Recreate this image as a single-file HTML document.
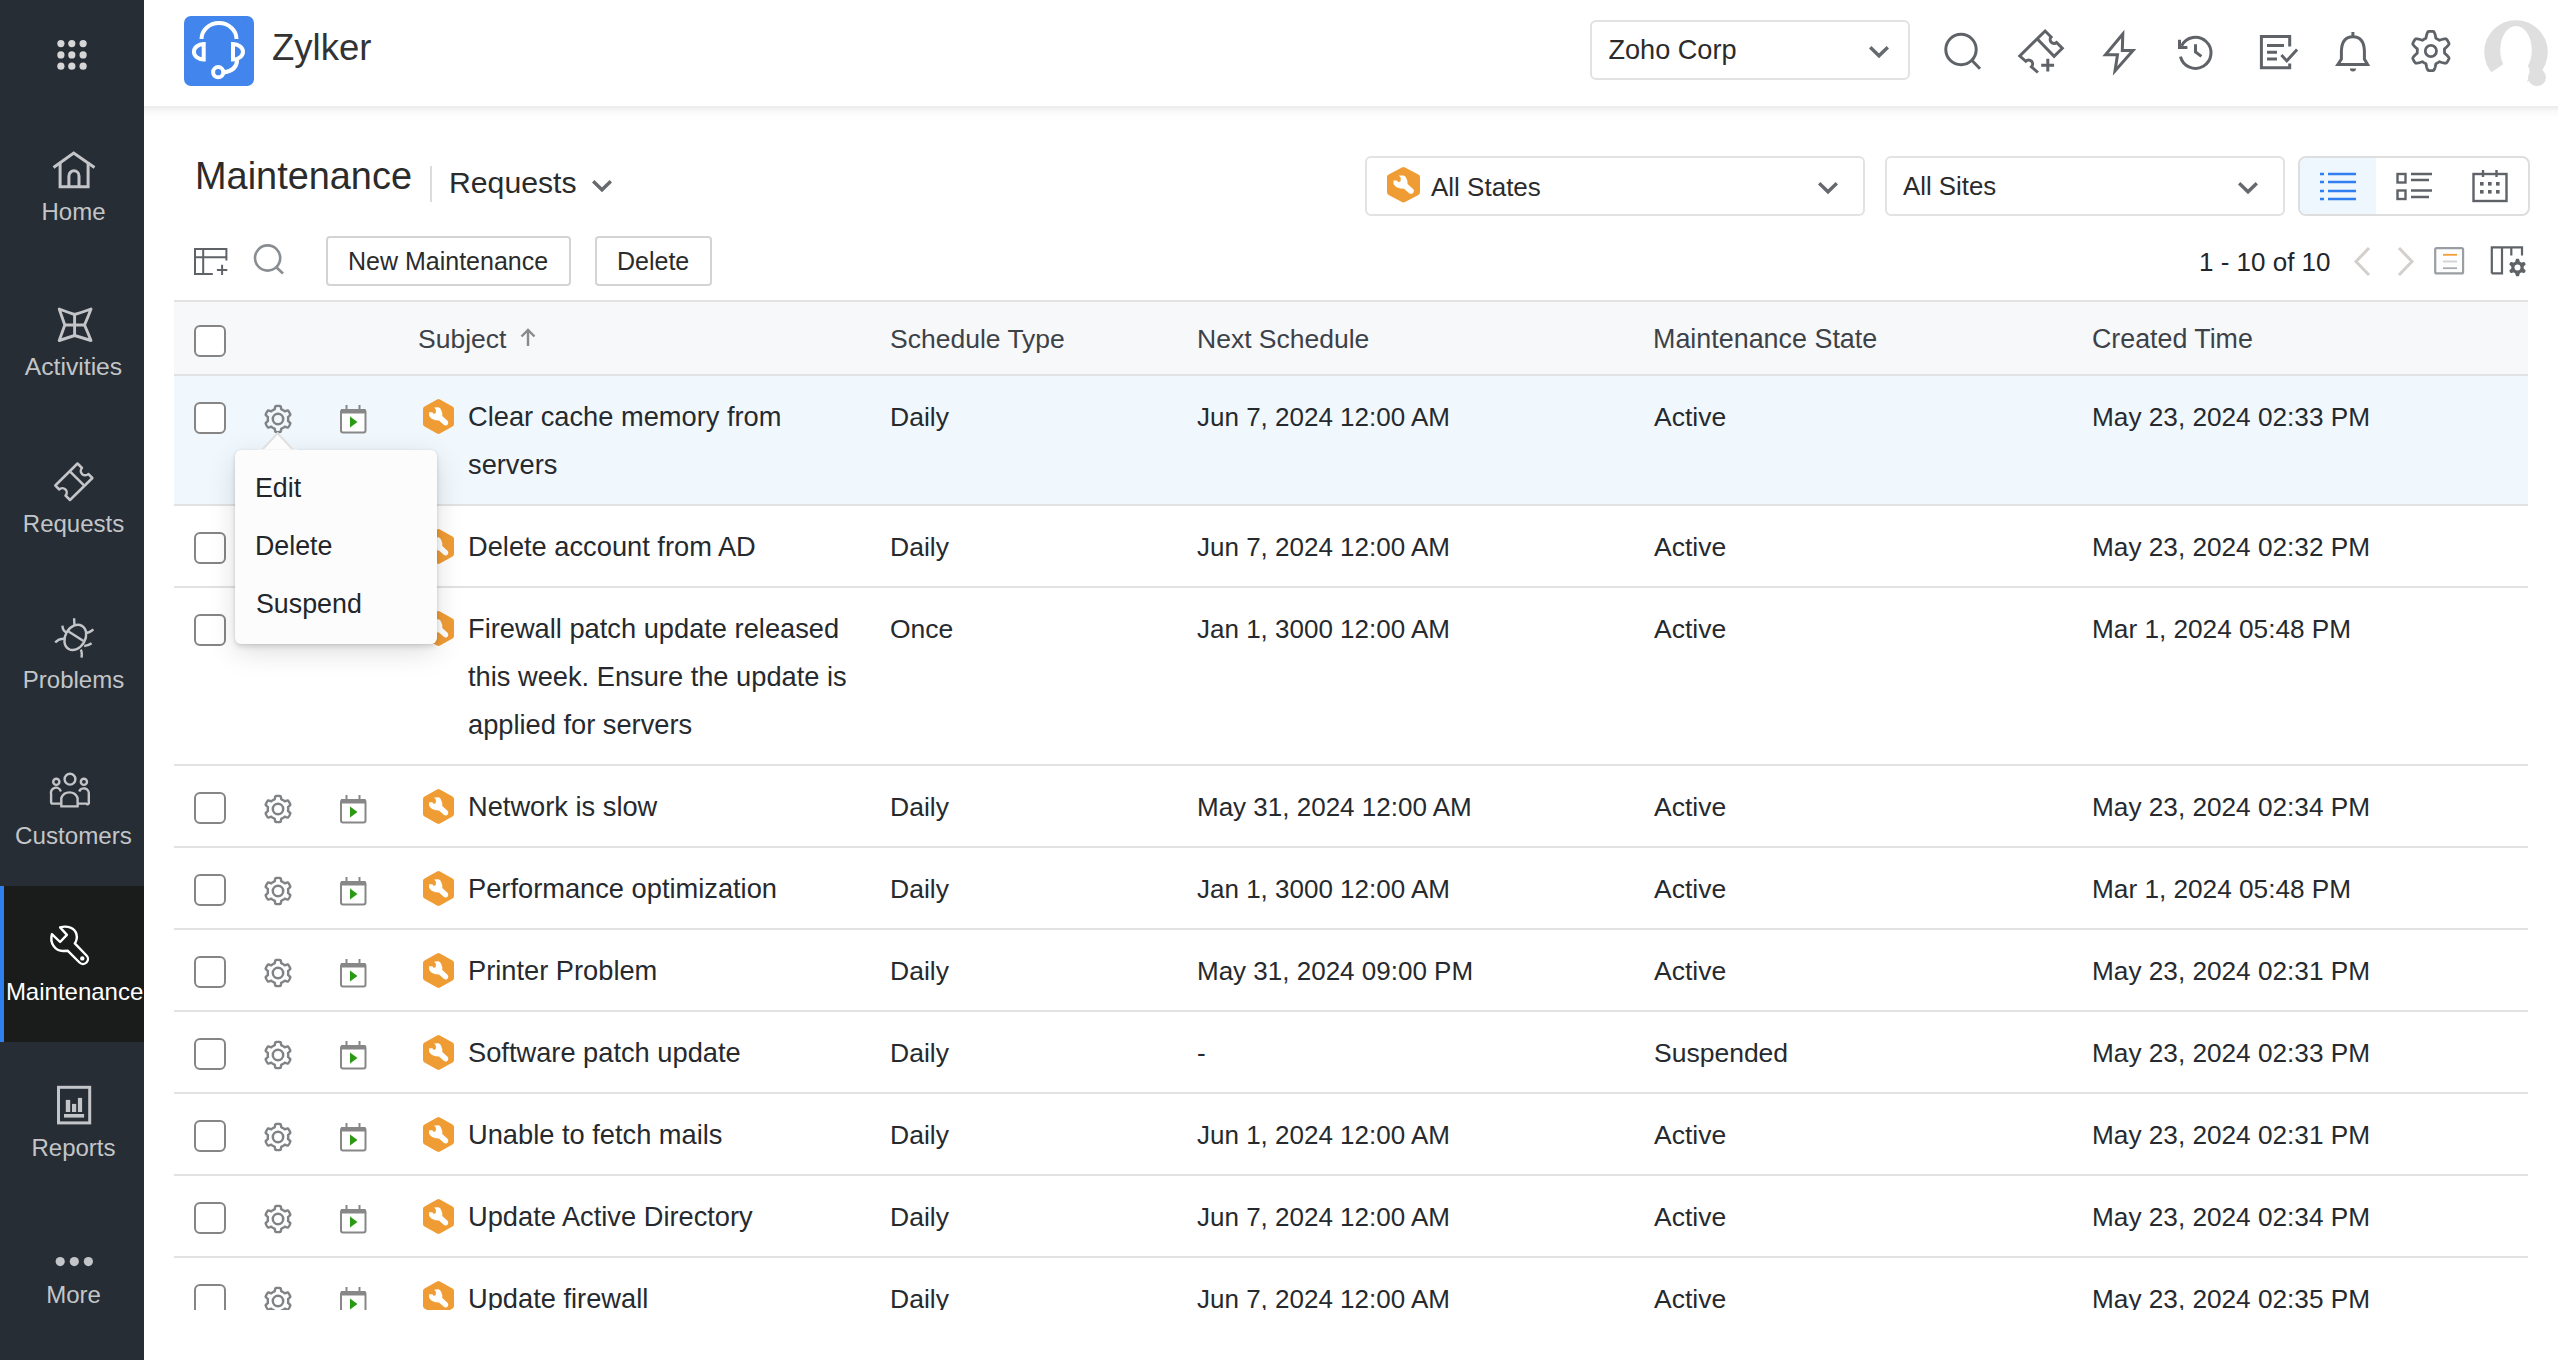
<!DOCTYPE html><html><head><meta charset="utf-8"><style>
*{margin:0;padding:0;box-sizing:border-box}
html,body{width:2558px;height:1360px;overflow:hidden;background:#fff;font-family:"Liberation Sans",sans-serif}
.t{position:absolute;line-height:1;white-space:nowrap}
.a{position:absolute}
svg{position:absolute;overflow:visible}
</style></head><body>
<div class="a" style="left:0;top:0;width:144px;height:1360px;background:#262d35"></div>
<svg style="left:0;top:0" width="144" height="106"><circle cx="60.9" cy="43.6" r="3.6" fill="#d6d6d6"/><circle cx="71.8" cy="43.6" r="3.6" fill="#d6d6d6"/><circle cx="83.1" cy="43.6" r="3.6" fill="#d6d6d6"/><circle cx="60.9" cy="54.9" r="3.6" fill="#d6d6d6"/><circle cx="71.8" cy="54.9" r="3.6" fill="#d6d6d6"/><circle cx="83.1" cy="54.9" r="3.6" fill="#d6d6d6"/><circle cx="60.9" cy="66.2" r="3.6" fill="#d6d6d6"/><circle cx="71.8" cy="66.2" r="3.6" fill="#d6d6d6"/><circle cx="83.1" cy="66.2" r="3.6" fill="#d6d6d6"/></svg>
<div class="a" style="left:0;top:886px;width:144px;height:156px;background:#1a1c1c"></div>
<div class="a" style="left:0;top:886px;width:4px;height:156px;background:#2f7ff0"></div>
<svg style="left:0;top:106px" width="144" height="156"><g fill="none" stroke="#c3c5c8" stroke-width="3" stroke-linejoin="miter">
<path d="M53.5 61.5 L73.7 47 L94.5 61.5"/><path d="M60.1 56 V80.8 H88.1 V56"/><path d="M68.9 80.8 V69.9 A5.05 5.05 0 0 1 79 69.9 V80.8"/></g></svg>
<svg style="left:0;top:262px" width="144" height="156"><g fill="none" stroke="#c3c5c8" stroke-width="2.9" stroke-linejoin="round">
<path d="M59.2 47 Q67 50 74.6 52.5 Q83 50 91 47 Q88 55 84.5 63 Q88 71 91 78.5 Q83 76 74.6 73.5 Q67 76 59.2 78.5 Q62 71 64.8 63 Q62 55 59.2 47 Z"/><path d="M74.6 52.5 V73.5 M64.8 63 H84.5"/></g></svg>
<svg style="left:0;top:418px" width="144" height="156"><g fill="none" stroke="#c3c5c8" stroke-width="2.5" stroke-linejoin="round">
<path d="M77.5 45.5 L82 50 A4.3 4.3 0 0 0 88.3 56 L92.4 60 L70 82 L65.5 77.5 A4.3 4.3 0 0 0 59.3 71.5 L55.3 67.5 Z"/><path d="M70.4 53.8 L83.8 67.2"/></g></svg>
<svg style="left:0;top:574px" width="144" height="156"><g fill="none" stroke="#c3c5c8" stroke-width="2.4" stroke-linecap="butt">
<ellipse cx="75.3" cy="63.4" rx="10" ry="13.3" transform="rotate(30 75.3 63.4)"/><path d="M68.2 57.3 L83.5 67"/>
<path d="M74.1 44.2 L74.4 51 M62.4 51.6 Q62.8 57.5 67 58.6 M55.2 68.6 Q58.5 64.6 64.8 64.8 M93.4 55.3 Q89.5 58.8 85.2 59 M91.6 69.3 Q88 72 84.2 72 M81.6 83.6 Q82.2 78 80.8 75.6"/></g></svg>
<svg style="left:0;top:730px" width="144" height="156"><g fill="none" stroke="#c3c5c8" stroke-width="2.4" stroke-linejoin="round">
<circle cx="70" cy="49.2" r="5.4"/><circle cx="56.3" cy="51.8" r="3.1"/><circle cx="83.9" cy="51.8" r="3.1"/>
<path d="M61.3 76.4 V68 A8.7 8.7 0 0 1 77.6 68 V76.4 Z"/><path d="M61 73.6 H52.5 A1.5 1.5 0 0 1 51.1 72 V64 A5 5 0 0 1 60.8 61.5"/><path d="M77.8 73.6 H86.3 A1.5 1.5 0 0 0 88.8 72 V64 A5 5 0 0 0 79.2 61.5"/></g></svg>
<svg style="left:0;top:886px" width="144" height="156"><g fill="none" stroke="#ffffff" stroke-width="2.4" stroke-linejoin="round">
<path d="M60.1 41.4 L66.9 48.9 L60.1 56 L51.9 48.2 C49.5 57 55 65 63 65 L67.6 64.7 L79.5 76.5 A4.9 4.9 0 0 0 86.5 69.5 L74.8 57.4 C78.5 52 77 44 70.5 41.6 C67 40.4 63 40.5 60.1 41.4 Z"/></g><circle cx="82.3" cy="72.4" r="2.2" fill="#fff"/></svg>
<svg style="left:0;top:1042px" width="144" height="156"><g fill="none" stroke="#c3c5c8" stroke-width="3">
<rect x="58.5" y="45.3" width="31.2" height="35.6"/></g><g fill="#c3c5c8"><rect x="65.8" y="57.9" width="4.4" height="12.1"/><rect x="72" y="61.9" width="4.2" height="8.1"/><rect x="77.9" y="55.9" width="4.2" height="14.1"/><rect x="64" y="72" width="20.1" height="3.6"/></g></svg>
<svg style="left:0;top:1198px" width="144" height="156"><g fill="#c3c5c8"><circle cx="60.2" cy="63.6" r="4.6"/><circle cx="74.3" cy="63.6" r="4.6"/><circle cx="88.4" cy="63.6" r="4.6"/></g></svg>
<div class="t" style="left:1.5px;width:144px;text-align:center;top:199.68px;font-size:24px;color:#c3c5c8">Home</div>
<div class="t" style="left:1.5px;width:144px;text-align:center;top:355.09px;font-size:24.7px;color:#c3c5c8">Activities</div>
<div class="t" style="left:1.5px;width:144px;text-align:center;top:511.68px;font-size:24px;color:#c3c5c8">Requests</div>
<div class="t" style="left:1.5px;width:144px;text-align:center;top:667.68px;font-size:24px;color:#c3c5c8">Problems</div>
<div class="t" style="left:1.5px;width:144px;text-align:center;top:823.51px;font-size:24.2px;color:#c3c5c8">Customers</div>
<div class="t" style="left:2.6px;width:144px;text-align:center;top:979.68px;font-size:24px;color:#ffffff">Maintenance</div>
<div class="t" style="left:1.5px;width:144px;text-align:center;top:1135.68px;font-size:24px;color:#c3c5c8">Reports</div>
<div class="t" style="left:1.5px;width:144px;text-align:center;top:1282.68px;font-size:24px;color:#c3c5c8">More</div>
<div class="a" style="left:144px;top:106px;width:2414px;height:12px;background:linear-gradient(#ececec 0px,#efefef 2px,#f8f8f8 5px,#fcfcfc 8px,#fff 12px)"></div>
<div class="a" style="left:184px;top:16px;width:70px;height:70px;border-radius:7px;background:#4285ec"></div>
<svg style="left:184px;top:16px" width="70" height="70"><g fill="none" stroke="#fff" stroke-width="4">
<path d="M17.5 23 A17.5 16 0 0 1 52.5 23"/>
<path d="M19.7 28.1 V43.5 A9.8 7.7 0 0 1 19.7 28.1 Z"/>
<path d="M49 28.1 V43.5 A10 7.7 0 0 0 49 28.1 Z"/>
<path d="M53.2 44 Q52.5 54.5 40 56.5"/>
<circle cx="34.2" cy="56.2" r="5.1"/></g></svg>
<div class="t" style="left:272px;top:30.10px;font-size:36.5px;color:#333333;">Zylker</div>
<div class="a" style="left:1590px;top:20px;width:320px;height:60px;border:2px solid #e2e2e2;border-radius:6px"></div>
<div class="t" style="left:1608.5px;top:36.26px;font-size:27.1px;color:#2b2b2b;">Zoho Corp</div>
<svg style="left:1868px;top:45px" width="22" height="13"><path d="M2.2 2.2 L11.0 10.8 L19.8 2.2" fill="none" stroke="#666a6e" stroke-width="3.4"/></svg>
<svg style="left:1930px;top:15px" width="630" height="80"><g fill="none" stroke="#5f6368" stroke-width="3">
<circle cx="31" cy="34.5" r="15.2"/><path d="M41.8 45.3 L50 53.8"/>
<path d="M107.9 57.5 L101.5 51.8 A3.9 3.9 0 0 0 95.8 46.3 L89.8 41 L115.1 16 L121.1 22 A3.9 3.9 0 0 0 126.6 27.5 L132.3 33.3 L124.1 41.3 L107.4 24"/>
<path d="M117.8 43.8 V56.6 M111.2 50.3 H124.1"/>
<path d="M192.8 19 L175.5 39.8 H187.5 L185 56 L203 35.6 H192.3 Z"/>
</g></svg>
<svg style="left:2160px;top:15px" width="300" height="80"><g fill="none" stroke="#5f6368" stroke-width="3">
<path d="M20.46 41.55 A15.5 15.5 0 1 0 21.66 30.83"/><path d="M19.5 24.7 V32.6 H27.4" />
<path d="M35.5 29.2 V36.9 L41.4 41.4"/>
<path d="M129.7 31.5 V21.4 H101.4 V52.8 H129.7 V48.6"/><path d="M107 30.6 H124 M107 37.3 H117 M107 44 H117"/><path d="M121.4 40 L126.8 45.9 L137.1 34.6"/>
<path d="M177.8 49.6 H207.6 L204.4 44 V36 Q204 21.8 192.9 21.8 Q181.8 21.8 181.4 36 V44 Z"/><path d="M192.9 17 V21.8"/>
</g><path d="M189.9 53.5 H196 A3.05 3.05 0 0 1 189.9 53.5 Z" fill="#5f6368"/></svg>
<svg style="left:2400px;top:20px" width="60" height="60"><path d="M44.50 31.00 L44.50 31.36 L44.48 31.71 L44.46 32.07 L44.43 32.42 L44.38 32.78 L44.51 33.16 L45.08 33.63 L45.69 34.14 L46.31 34.70 L46.93 35.30 L47.54 35.93 L48.10 36.59 L48.60 37.27 L49.03 37.96 L49.01 38.50 L48.81 38.97 L48.59 39.44 L48.36 39.90 L48.12 40.35 L47.87 40.80 L47.61 41.24 L47.34 41.67 L47.05 42.10 L46.76 42.52 L46.45 42.93 L45.99 43.22 L45.18 43.20 L44.34 43.10 L43.49 42.94 L42.64 42.74 L41.81 42.50 L41.02 42.23 L40.27 41.97 L39.57 41.71 L39.18 41.79 L38.89 42.00 L38.60 42.21 L38.31 42.41 L38.01 42.60 L37.70 42.78 L37.39 42.95 L37.07 43.12 L36.75 43.28 L36.43 43.42 L36.10 43.56 L35.84 43.86 L35.71 44.59 L35.57 45.38 L35.40 46.20 L35.20 47.03 L34.95 47.87 L34.66 48.69 L34.32 49.46 L33.94 50.18 L33.46 50.43 L32.95 50.49 L32.44 50.54 L31.93 50.57 L31.41 50.59 L30.90 50.60 L30.39 50.59 L29.87 50.57 L29.36 50.54 L28.85 50.49 L28.34 50.43 L27.86 50.18 L27.48 49.46 L27.14 48.69 L26.85 47.87 L26.60 47.03 L26.40 46.20 L26.23 45.38 L26.09 44.59 L25.96 43.86 L25.70 43.56 L25.37 43.42 L25.05 43.28 L24.73 43.12 L24.41 42.95 L24.10 42.78 L23.79 42.60 L23.49 42.41 L23.20 42.21 L22.91 42.00 L22.62 41.79 L22.23 41.71 L21.53 41.97 L20.78 42.23 L19.99 42.50 L19.16 42.74 L18.31 42.94 L17.46 43.10 L16.62 43.20 L15.81 43.22 L15.35 42.93 L15.04 42.52 L14.75 42.10 L14.46 41.67 L14.19 41.24 L13.93 40.80 L13.68 40.35 L13.44 39.90 L13.21 39.44 L12.99 38.97 L12.79 38.50 L12.77 37.96 L13.20 37.27 L13.70 36.59 L14.26 35.93 L14.87 35.30 L15.49 34.70 L16.11 34.14 L16.72 33.63 L17.29 33.16 L17.42 32.78 L17.37 32.42 L17.34 32.07 L17.32 31.71 L17.30 31.36 L17.30 31.00 L17.30 30.64 L17.32 30.29 L17.34 29.93 L17.37 29.58 L17.42 29.22 L17.29 28.84 L16.72 28.37 L16.11 27.86 L15.49 27.30 L14.87 26.70 L14.26 26.07 L13.70 25.41 L13.20 24.73 L12.77 24.04 L12.79 23.50 L12.99 23.03 L13.21 22.56 L13.44 22.10 L13.68 21.65 L13.93 21.20 L14.19 20.76 L14.46 20.33 L14.75 19.90 L15.04 19.48 L15.35 19.07 L15.81 18.78 L16.62 18.80 L17.46 18.90 L18.31 19.06 L19.16 19.26 L19.99 19.50 L20.78 19.77 L21.53 20.03 L22.23 20.29 L22.62 20.21 L22.91 20.00 L23.20 19.79 L23.49 19.59 L23.79 19.40 L24.10 19.22 L24.41 19.05 L24.73 18.88 L25.05 18.72 L25.37 18.58 L25.70 18.44 L25.96 18.14 L26.09 17.41 L26.23 16.62 L26.40 15.80 L26.60 14.97 L26.85 14.13 L27.14 13.31 L27.48 12.54 L27.86 11.82 L28.34 11.57 L28.85 11.51 L29.36 11.46 L29.87 11.43 L30.39 11.41 L30.90 11.40 L31.41 11.41 L31.93 11.43 L32.44 11.46 L32.95 11.51 L33.46 11.57 L33.94 11.82 L34.32 12.54 L34.66 13.31 L34.95 14.13 L35.20 14.97 L35.40 15.80 L35.57 16.62 L35.71 17.41 L35.84 18.14 L36.10 18.44 L36.43 18.58 L36.75 18.72 L37.07 18.88 L37.39 19.05 L37.70 19.22 L38.01 19.40 L38.31 19.59 L38.60 19.79 L38.89 20.00 L39.18 20.21 L39.57 20.29 L40.27 20.03 L41.02 19.77 L41.81 19.50 L42.64 19.26 L43.49 19.06 L44.34 18.90 L45.18 18.80 L45.99 18.78 L46.45 19.07 L46.76 19.48 L47.05 19.90 L47.34 20.33 L47.61 20.76 L47.87 21.20 L48.12 21.65 L48.36 22.10 L48.59 22.56 L48.81 23.03 L49.01 23.50 L49.03 24.04 L48.60 24.73 L48.10 25.41 L47.54 26.07 L46.93 26.70 L46.31 27.30 L45.69 27.86 L45.08 28.37 L44.51 28.84 L44.38 29.22 L44.43 29.58 L44.46 29.93 L44.48 30.29 L44.50 30.64 Z" fill="none" stroke="#5f6368" stroke-width="2.8" stroke-linejoin="round"/><circle cx="30.9" cy="31" r="5.6" fill="none" stroke="#5f6368" stroke-width="2.8"/></svg>
<svg style="left:2470px;top:10px" width="88" height="85"><circle cx="46" cy="42" r="31.8" fill="#dfdfdf"/>
<ellipse cx="46" cy="40" rx="15.8" ry="24" fill="#fff"/>
<path d="M34 48 L58 48 L56 53 L59 58 L60 64 L52 85 L10 85 L10 66 L21 62.5 L35 53 Z" fill="#fff"/>
<circle cx="67" cy="67.2" r="8.9" fill="#dfdfdf"/></svg>
<div class="t" style="left:195px;top:157.92px;font-size:37.9px;color:#2b2b2b;">Maintenance</div>
<div class="a" style="left:430px;top:166px;width:2px;height:36px;background:#dcdcdc"></div>
<div class="t" style="left:449px;top:168.04px;font-size:30.2px;color:#2b2b2b;">Requests</div>
<svg style="left:591px;top:178.6px" width="22" height="13"><path d="M2.2 2.2 L11.0 10.8 L19.8 2.2" fill="none" stroke="#666a6e" stroke-width="3.4"/></svg>
<div class="a" style="left:1365px;top:156px;width:500px;height:60px;border:2px solid #e2e2e2;border-radius:6px"></div>
<svg style="left:1387px;top:167.4px" width="33" height="35.4"><g transform="scale(1.0645 1.0114)"><path d="M15.5 3 L28 10 V25 L15.5 32 L3 25 V10 Z" fill="#f09c35" stroke="#f09c35" stroke-width="6" stroke-linejoin="round"/><path d="M11.2 8.5 L15.6 8.3 Q17.6 9.2 17.9 10.6 Q19.6 13.5 19.3 16.9 L24.5 21.7 Q25.6 23 25.2 24.3 Q24.7 26.2 23.4 26.5 Q22 26.7 21.1 26.1 L16 21.5 Q12.5 21.5 9.7 20.2 Q7.3 19 6.1 16.7 L6.1 13.3 L9.4 13.3 L10.7 15 L12.8 14 L12.9 10.7 Z" fill="#fff"/></g></svg>
<div class="t" style="left:1431px;top:173.99px;font-size:26px;color:#2b2b2b;">All States</div>
<svg style="left:1817px;top:181px" width="22" height="13"><path d="M2.2 2.2 L11.0 10.8 L19.8 2.2" fill="none" stroke="#666a6e" stroke-width="3.4"/></svg>
<div class="a" style="left:1885px;top:156px;width:400px;height:60px;border:2px solid #e2e2e2;border-radius:6px"></div>
<div class="t" style="left:1903px;top:174.16px;font-size:25.8px;color:#2b2b2b;">All Sites</div>
<svg style="left:2237px;top:181px" width="22" height="13"><path d="M2.2 2.2 L11.0 10.8 L19.8 2.2" fill="none" stroke="#666a6e" stroke-width="3.4"/></svg>
<div class="a" style="left:2298px;top:156px;width:232px;height:60px;border:2px solid #dedede;border-radius:8px;overflow:hidden"><div class="a" style="left:0;top:0;width:76px;height:56px;background:#eef6fe"></div></div>
<svg style="left:2298px;top:156px" width="232" height="60"><g stroke="#2f7ff0" stroke-width="2.6">
<path d="M22 18 H26 M30 18 H58 M22 26 H26 M30 26 H58 M22 35 H26 M30 35 H58 M22 43 H26 M30 43 H58"/></g>
<g fill="none" stroke="#5f6368" stroke-width="2.4"><rect x="99.5" y="18" width="8" height="8.5"/><rect x="99.5" y="34.5" width="8" height="8.5"/>
<path d="M113 18 H134 M113 24 H131 M113 34.5 H134 M113 41 H131"/>
<rect x="175.5" y="18" width="33" height="27"/><path d="M185 14 V21 M198.5 14 V21"/></g>
<g fill="#5f6368"><rect x="182" y="26" width="3.6" height="3.6"/><rect x="190" y="26" width="3.6" height="3.6"/><rect x="198" y="26" width="3.6" height="3.6"/>
<rect x="182" y="34" width="3.6" height="3.6"/><rect x="190" y="34" width="3.6" height="3.6"/><rect x="198" y="34" width="3.6" height="3.6"/></g></svg>
<svg style="left:180px;top:230px" width="120" height="60"><g fill="none" stroke="#5f6368" stroke-width="2">
<path d="M32.8 43.9 H15 V19 H46.4 V30.5"/><path d="M15 27.2 H46.4 M23.2 19 V43.9"/><path d="M42.1 34.7 V45.1 M36.9 39.9 H47.3"/></g>
<g fill="none" stroke="#888d92" stroke-width="2.6"><circle cx="87.6" cy="28" r="12.6"/><path d="M96 37 L103 43.5"/></g></svg>
<div class="a" style="left:326px;top:236px;width:245px;height:50px;border:2px solid #d4d4d4;border-radius:4px"></div>
<div class="t" style="left:348px;top:249.14px;font-size:25px;color:#2b2b2b;">New Maintenance</div>
<div class="a" style="left:595px;top:236px;width:117px;height:50px;border:2px solid #d4d4d4;border-radius:4px"></div>
<div class="t" style="left:617px;top:249.14px;font-size:25px;color:#2b2b2b;">Delete</div>
<div class="t" style="left:2199px;top:249.29px;font-size:26px;color:#22262b;">1 - 10 of 10</div>
<svg style="left:2340px;top:240px" width="200" height="45"><g fill="none" stroke="#d2cfcc" stroke-width="3">
<path d="M29 8 L16 21.5 L29 35"/><path d="M59 8 L72 21.5 L59 35"/></g>
<rect x="95.2" y="8.1" width="27.9" height="25.3" rx="1.5" fill="#fdfdfd" stroke="#999ea3" stroke-width="2.2"/>
<path d="M103 14.8 H117" stroke="#f29d38" stroke-width="1.8"/><path d="M103 21.5 H117" stroke="#d2d4d6" stroke-width="2"/><path d="M103 28.2 H117" stroke="#a5a9ad" stroke-width="1.7"/>
<g fill="none" stroke="#5f6368" stroke-width="2.2"><path d="M151.8 33.4 V7.3 H182 V15.5 M162 7.3 V33.4 H151.8 M171.3 7.3 V15.5"/></g>
</svg>
<svg style="left:2500px;top:260px" width="30" height="30"><path d="M23.70 7.50 L23.70 7.66 L23.69 7.82 L23.68 7.99 L23.67 8.15 L23.65 8.31 L23.70 8.48 L23.95 8.69 L24.21 8.93 L24.48 9.17 L24.74 9.44 L25.00 9.72 L25.24 10.02 L25.46 10.32 L25.64 10.63 L25.63 10.87 L25.54 11.08 L25.44 11.29 L25.34 11.50 L25.23 11.70 L25.12 11.90 L25.00 12.10 L24.88 12.29 L24.75 12.48 L24.62 12.67 L24.48 12.86 L24.28 12.99 L23.92 12.98 L23.55 12.95 L23.18 12.89 L22.80 12.80 L22.44 12.70 L22.09 12.60 L21.76 12.48 L21.45 12.38 L21.27 12.42 L21.14 12.52 L21.01 12.61 L20.88 12.70 L20.74 12.79 L20.60 12.87 L20.46 12.95 L20.31 13.02 L20.17 13.10 L20.02 13.16 L19.87 13.23 L19.75 13.36 L19.69 13.68 L19.62 14.02 L19.54 14.38 L19.44 14.74 L19.33 15.11 L19.19 15.46 L19.04 15.80 L18.86 16.12 L18.65 16.22 L18.42 16.25 L18.19 16.27 L17.96 16.29 L17.73 16.30 L17.50 16.30 L17.27 16.30 L17.04 16.29 L16.81 16.27 L16.58 16.25 L16.35 16.22 L16.14 16.12 L15.96 15.80 L15.81 15.46 L15.67 15.11 L15.56 14.74 L15.46 14.38 L15.38 14.02 L15.31 13.68 L15.25 13.36 L15.13 13.23 L14.98 13.16 L14.83 13.10 L14.69 13.02 L14.54 12.95 L14.40 12.87 L14.26 12.79 L14.12 12.70 L13.99 12.61 L13.86 12.52 L13.73 12.42 L13.55 12.38 L13.24 12.48 L12.91 12.60 L12.56 12.70 L12.20 12.80 L11.82 12.89 L11.45 12.95 L11.08 12.98 L10.72 12.99 L10.52 12.86 L10.38 12.67 L10.25 12.48 L10.12 12.29 L10.00 12.10 L9.88 11.90 L9.77 11.70 L9.66 11.50 L9.56 11.29 L9.46 11.08 L9.37 10.87 L9.36 10.63 L9.54 10.32 L9.76 10.02 L10.00 9.72 L10.26 9.44 L10.52 9.17 L10.79 8.93 L11.05 8.69 L11.30 8.48 L11.35 8.31 L11.33 8.15 L11.32 7.99 L11.31 7.82 L11.30 7.66 L11.30 7.50 L11.30 7.34 L11.31 7.18 L11.32 7.01 L11.33 6.85 L11.35 6.69 L11.30 6.52 L11.05 6.31 L10.79 6.07 L10.52 5.83 L10.26 5.56 L10.00 5.28 L9.76 4.98 L9.54 4.68 L9.36 4.37 L9.37 4.13 L9.46 3.92 L9.56 3.71 L9.66 3.50 L9.77 3.30 L9.88 3.10 L10.00 2.90 L10.12 2.71 L10.25 2.52 L10.38 2.33 L10.52 2.14 L10.72 2.01 L11.08 2.02 L11.45 2.05 L11.82 2.11 L12.20 2.20 L12.56 2.30 L12.91 2.40 L13.24 2.52 L13.55 2.62 L13.73 2.58 L13.86 2.48 L13.99 2.39 L14.12 2.30 L14.26 2.21 L14.40 2.13 L14.54 2.05 L14.69 1.98 L14.83 1.90 L14.98 1.84 L15.13 1.77 L15.25 1.64 L15.31 1.32 L15.38 0.98 L15.46 0.62 L15.56 0.26 L15.67 -0.11 L15.81 -0.46 L15.96 -0.80 L16.14 -1.12 L16.35 -1.22 L16.58 -1.25 L16.81 -1.27 L17.04 -1.29 L17.27 -1.30 L17.50 -1.30 L17.73 -1.30 L17.96 -1.29 L18.19 -1.27 L18.42 -1.25 L18.65 -1.22 L18.86 -1.12 L19.04 -0.80 L19.19 -0.46 L19.33 -0.11 L19.44 0.26 L19.54 0.62 L19.62 0.98 L19.69 1.32 L19.75 1.64 L19.87 1.77 L20.02 1.84 L20.17 1.90 L20.31 1.98 L20.46 2.05 L20.60 2.13 L20.74 2.21 L20.88 2.30 L21.01 2.39 L21.14 2.48 L21.27 2.58 L21.45 2.62 L21.76 2.52 L22.09 2.40 L22.44 2.30 L22.80 2.20 L23.18 2.11 L23.55 2.05 L23.92 2.02 L24.28 2.01 L24.48 2.14 L24.62 2.33 L24.75 2.52 L24.88 2.71 L25.00 2.90 L25.12 3.10 L25.23 3.30 L25.34 3.50 L25.44 3.71 L25.54 3.92 L25.63 4.13 L25.64 4.37 L25.46 4.68 L25.24 4.98 L25.00 5.28 L24.74 5.56 L24.48 5.83 L24.21 6.07 L23.95 6.31 L23.70 6.52 L23.65 6.69 L23.67 6.85 L23.68 7.01 L23.69 7.18 L23.70 7.34 Z" fill="#5f6368"/><circle cx="17.5" cy="7.5" r="3" fill="#fff"/></svg>
<div class="a" style="left:174px;top:300px;width:2354px;height:76px;background:#f7f8fa;border-top:2px solid #e2e2e2;border-bottom:2px solid #e2e2e2"></div>
<div class="a" style="left:194px;top:325px;width:32px;height:32px;border:2px solid #858585;border-radius:6px;background:#fff"></div>
<div class="t" style="left:418px;top:325.57px;font-size:26.5px;color:#3d4248;">Subject</div>
<svg style="left:515px;top:326px" width="26" height="26"><path d="M13 4 V20 M6.5 10.5 L13 4 L19.5 10.5" fill="none" stroke="#8a8a8a" stroke-width="2.4"/></svg>
<div class="t" style="left:890px;top:325.57px;font-size:26.5px;color:#3d4248;">Schedule Type</div>
<div class="t" style="left:1197px;top:325.57px;font-size:26.5px;color:#3d4248;">Next Schedule</div>
<div class="t" style="left:1653px;top:326.23px;font-size:26.9px;color:#3d4248;">Maintenance State</div>
<div class="t" style="left:2092px;top:326.31px;font-size:26.8px;color:#3d4248;">Created Time</div>
<div class="a" style="left:0;top:0;width:2558px;height:1310px;overflow:hidden">
<div class="a" style="left:174px;top:376px;width:2354px;height:130px;background:#f1f8fd;border-bottom:2px solid #e2e2e2"></div>
<div class="a" style="left:194px;top:402px;width:32px;height:32px;border:2px solid #858585;border-radius:6px;background:#fff"></div>
<svg style="left:262px;top:403px" width="32" height="32"><path d="M26.20 16.00 L26.20 16.27 L26.19 16.53 L26.17 16.80 L26.14 17.07 L26.11 17.33 L26.07 17.60 L26.03 17.86 L26.17 18.16 L26.71 18.57 L27.25 19.02 L27.78 19.49 L28.27 19.99 L28.35 20.37 L28.23 20.69 L28.10 21.01 L27.97 21.33 L27.82 21.64 L27.67 21.95 L27.51 22.25 L27.34 22.55 L27.17 22.84 L26.99 23.13 L26.80 23.42 L26.60 23.70 L26.39 23.97 L26.18 24.24 L25.96 24.51 L25.59 24.63 L24.91 24.46 L24.24 24.24 L23.58 23.99 L22.96 23.73 L22.62 23.76 L22.42 23.93 L22.21 24.09 L22.00 24.25 L21.78 24.41 L21.56 24.55 L21.33 24.70 L21.10 24.83 L20.87 24.96 L20.63 25.09 L20.39 25.21 L20.15 25.32 L19.90 25.42 L19.66 25.52 L19.40 25.61 L19.21 25.89 L19.13 26.56 L19.02 27.25 L18.87 27.95 L18.68 28.62 L18.39 28.88 L18.05 28.94 L17.71 28.99 L17.37 29.03 L17.03 29.06 L16.69 29.08 L16.34 29.10 L16.00 29.10 L15.66 29.10 L15.31 29.08 L14.97 29.06 L14.63 29.03 L14.29 28.99 L13.95 28.94 L13.61 28.88 L13.32 28.62 L13.13 27.95 L12.98 27.25 L12.87 26.56 L12.79 25.89 L12.60 25.61 L12.34 25.52 L12.10 25.42 L11.85 25.32 L11.61 25.21 L11.37 25.09 L11.13 24.96 L10.90 24.83 L10.67 24.70 L10.44 24.55 L10.22 24.41 L10.00 24.25 L9.79 24.09 L9.58 23.93 L9.38 23.76 L9.04 23.73 L8.42 23.99 L7.76 24.24 L7.09 24.46 L6.41 24.63 L6.04 24.51 L5.82 24.24 L5.61 23.97 L5.40 23.70 L5.20 23.42 L5.01 23.13 L4.83 22.84 L4.66 22.55 L4.49 22.25 L4.33 21.95 L4.18 21.64 L4.03 21.33 L3.90 21.01 L3.77 20.69 L3.65 20.37 L3.73 19.99 L4.22 19.49 L4.75 19.02 L5.29 18.57 L5.83 18.16 L5.97 17.86 L5.93 17.60 L5.89 17.33 L5.86 17.07 L5.83 16.80 L5.81 16.53 L5.80 16.27 L5.80 16.00 L5.80 15.73 L5.81 15.47 L5.83 15.20 L5.86 14.93 L5.89 14.67 L5.93 14.40 L5.97 14.14 L5.83 13.84 L5.29 13.43 L4.75 12.98 L4.22 12.51 L3.73 12.01 L3.65 11.63 L3.77 11.31 L3.90 10.99 L4.03 10.67 L4.18 10.36 L4.33 10.05 L4.49 9.75 L4.66 9.45 L4.83 9.16 L5.01 8.87 L5.20 8.58 L5.40 8.30 L5.61 8.03 L5.82 7.76 L6.04 7.49 L6.41 7.37 L7.09 7.54 L7.76 7.76 L8.42 8.01 L9.04 8.27 L9.38 8.24 L9.58 8.07 L9.79 7.91 L10.00 7.75 L10.22 7.59 L10.44 7.45 L10.67 7.30 L10.90 7.17 L11.13 7.04 L11.37 6.91 L11.61 6.79 L11.85 6.68 L12.10 6.58 L12.34 6.48 L12.60 6.39 L12.79 6.11 L12.87 5.44 L12.98 4.75 L13.13 4.05 L13.32 3.38 L13.61 3.12 L13.95 3.06 L14.29 3.01 L14.63 2.97 L14.97 2.94 L15.31 2.92 L15.66 2.90 L16.00 2.90 L16.34 2.90 L16.69 2.92 L17.03 2.94 L17.37 2.97 L17.71 3.01 L18.05 3.06 L18.39 3.12 L18.68 3.38 L18.87 4.05 L19.02 4.75 L19.13 5.44 L19.21 6.11 L19.40 6.39 L19.66 6.48 L19.90 6.58 L20.15 6.68 L20.39 6.79 L20.63 6.91 L20.87 7.04 L21.10 7.17 L21.33 7.30 L21.56 7.45 L21.78 7.59 L22.00 7.75 L22.21 7.91 L22.42 8.07 L22.62 8.24 L22.96 8.27 L23.58 8.01 L24.24 7.76 L24.91 7.54 L25.59 7.37 L25.96 7.49 L26.18 7.76 L26.39 8.03 L26.60 8.30 L26.80 8.58 L26.99 8.87 L27.17 9.16 L27.34 9.45 L27.51 9.75 L27.67 10.05 L27.82 10.36 L27.97 10.67 L28.10 10.99 L28.23 11.31 L28.35 11.63 L28.27 12.01 L27.78 12.51 L27.25 12.98 L26.71 13.43 L26.17 13.84 L26.03 14.14 L26.07 14.40 L26.11 14.67 L26.14 14.93 L26.17 15.20 L26.19 15.47 L26.20 15.73 Z" fill="none" stroke="#808386" stroke-width="2.4" stroke-linejoin="round"/><circle cx="16" cy="16" r="5.2" fill="none" stroke="#808386" stroke-width="2.5"/></svg>
<svg style="left:340px;top:405px" width="28" height="30"><rect x="1" y="5" width="24.5" height="22.5" rx="2" fill="#fff" stroke="#878787" stroke-width="2"/><rect x="1" y="4" width="24.5" height="4.5" fill="#878787"/><path d="M6.5 0 V5 M19.5 0 V5" stroke="#878787" stroke-width="2"/><path d="M10 11.5 L17.5 17 L10 22.5 Z" fill="#2a9a12"/></svg>
<svg style="left:423px;top:398.8px" width="31" height="35"><g transform="scale(1.0000 1.0000)"><path d="M15.5 3 L28 10 V25 L15.5 32 L3 25 V10 Z" fill="#f09c35" stroke="#f09c35" stroke-width="6" stroke-linejoin="round"/><path d="M11.2 8.5 L15.6 8.3 Q17.6 9.2 17.9 10.6 Q19.6 13.5 19.3 16.9 L24.5 21.7 Q25.6 23 25.2 24.3 Q24.7 26.2 23.4 26.5 Q22 26.7 21.1 26.1 L16 21.5 Q12.5 21.5 9.7 20.2 Q7.3 19 6.1 16.7 L6.1 13.3 L9.4 13.3 L10.7 15 L12.8 14 L12.9 10.7 Z" fill="#fff"/></g></svg>
<div class="t" style="left:468px;top:402.93px;font-size:27.25px;color:#262a2e;">Clear cache memory from</div>
<div class="t" style="left:468px;top:450.93px;font-size:27.25px;color:#262a2e;">servers</div>
<div class="t" style="left:890px;top:403.57px;font-size:26.5px;color:#262a2e;">Daily</div>
<div class="t" style="left:1197px;top:403.99px;font-size:26px;color:#262a2e;">Jun 7, 2024 12:00 AM</div>
<div class="t" style="left:1654px;top:403.57px;font-size:26.5px;color:#262a2e;">Active</div>
<div class="t" style="left:2092px;top:403.82px;font-size:26.2px;color:#262a2e;">May 23, 2024 02:33 PM</div>
<div class="a" style="left:174px;top:506px;width:2354px;height:82px;background:#ffffff;border-bottom:2px solid #e2e2e2"></div>
<div class="a" style="left:194px;top:532px;width:32px;height:32px;border:2px solid #858585;border-radius:6px;background:#fff"></div>
<svg style="left:423px;top:528.8px" width="31" height="35"><g transform="scale(1.0000 1.0000)"><path d="M15.5 3 L28 10 V25 L15.5 32 L3 25 V10 Z" fill="#f09c35" stroke="#f09c35" stroke-width="6" stroke-linejoin="round"/><path d="M11.2 8.5 L15.6 8.3 Q17.6 9.2 17.9 10.6 Q19.6 13.5 19.3 16.9 L24.5 21.7 Q25.6 23 25.2 24.3 Q24.7 26.2 23.4 26.5 Q22 26.7 21.1 26.1 L16 21.5 Q12.5 21.5 9.7 20.2 Q7.3 19 6.1 16.7 L6.1 13.3 L9.4 13.3 L10.7 15 L12.8 14 L12.9 10.7 Z" fill="#fff"/></g></svg>
<div class="t" style="left:468px;top:532.93px;font-size:27.25px;color:#262a2e;">Delete account from AD</div>
<div class="t" style="left:890px;top:533.57px;font-size:26.5px;color:#262a2e;">Daily</div>
<div class="t" style="left:1197px;top:533.99px;font-size:26px;color:#262a2e;">Jun 7, 2024 12:00 AM</div>
<div class="t" style="left:1654px;top:533.57px;font-size:26.5px;color:#262a2e;">Active</div>
<div class="t" style="left:2092px;top:533.82px;font-size:26.2px;color:#262a2e;">May 23, 2024 02:32 PM</div>
<div class="a" style="left:174px;top:588px;width:2354px;height:178px;background:#ffffff;border-bottom:2px solid #e2e2e2"></div>
<div class="a" style="left:194px;top:614px;width:32px;height:32px;border:2px solid #858585;border-radius:6px;background:#fff"></div>
<svg style="left:423px;top:610.8px" width="31" height="35"><g transform="scale(1.0000 1.0000)"><path d="M15.5 3 L28 10 V25 L15.5 32 L3 25 V10 Z" fill="#f09c35" stroke="#f09c35" stroke-width="6" stroke-linejoin="round"/><path d="M11.2 8.5 L15.6 8.3 Q17.6 9.2 17.9 10.6 Q19.6 13.5 19.3 16.9 L24.5 21.7 Q25.6 23 25.2 24.3 Q24.7 26.2 23.4 26.5 Q22 26.7 21.1 26.1 L16 21.5 Q12.5 21.5 9.7 20.2 Q7.3 19 6.1 16.7 L6.1 13.3 L9.4 13.3 L10.7 15 L12.8 14 L12.9 10.7 Z" fill="#fff"/></g></svg>
<div class="t" style="left:468px;top:614.93px;font-size:27.25px;color:#262a2e;">Firewall patch update released</div>
<div class="t" style="left:468px;top:662.93px;font-size:27.25px;color:#262a2e;">this week. Ensure the update is</div>
<div class="t" style="left:468px;top:710.93px;font-size:27.25px;color:#262a2e;">applied for servers</div>
<div class="t" style="left:890px;top:615.57px;font-size:26.5px;color:#262a2e;">Once</div>
<div class="t" style="left:1197px;top:615.99px;font-size:26px;color:#262a2e;">Jan 1, 3000 12:00 AM</div>
<div class="t" style="left:1654px;top:615.57px;font-size:26.5px;color:#262a2e;">Active</div>
<div class="t" style="left:2092px;top:615.82px;font-size:26.2px;color:#262a2e;">Mar 1, 2024 05:48 PM</div>
<div class="a" style="left:174px;top:766px;width:2354px;height:82px;background:#ffffff;border-bottom:2px solid #e2e2e2"></div>
<div class="a" style="left:194px;top:792px;width:32px;height:32px;border:2px solid #858585;border-radius:6px;background:#fff"></div>
<svg style="left:262px;top:793px" width="32" height="32"><path d="M26.20 16.00 L26.20 16.27 L26.19 16.53 L26.17 16.80 L26.14 17.07 L26.11 17.33 L26.07 17.60 L26.03 17.86 L26.17 18.16 L26.71 18.57 L27.25 19.02 L27.78 19.49 L28.27 19.99 L28.35 20.37 L28.23 20.69 L28.10 21.01 L27.97 21.33 L27.82 21.64 L27.67 21.95 L27.51 22.25 L27.34 22.55 L27.17 22.84 L26.99 23.13 L26.80 23.42 L26.60 23.70 L26.39 23.97 L26.18 24.24 L25.96 24.51 L25.59 24.63 L24.91 24.46 L24.24 24.24 L23.58 23.99 L22.96 23.73 L22.62 23.76 L22.42 23.93 L22.21 24.09 L22.00 24.25 L21.78 24.41 L21.56 24.55 L21.33 24.70 L21.10 24.83 L20.87 24.96 L20.63 25.09 L20.39 25.21 L20.15 25.32 L19.90 25.42 L19.66 25.52 L19.40 25.61 L19.21 25.89 L19.13 26.56 L19.02 27.25 L18.87 27.95 L18.68 28.62 L18.39 28.88 L18.05 28.94 L17.71 28.99 L17.37 29.03 L17.03 29.06 L16.69 29.08 L16.34 29.10 L16.00 29.10 L15.66 29.10 L15.31 29.08 L14.97 29.06 L14.63 29.03 L14.29 28.99 L13.95 28.94 L13.61 28.88 L13.32 28.62 L13.13 27.95 L12.98 27.25 L12.87 26.56 L12.79 25.89 L12.60 25.61 L12.34 25.52 L12.10 25.42 L11.85 25.32 L11.61 25.21 L11.37 25.09 L11.13 24.96 L10.90 24.83 L10.67 24.70 L10.44 24.55 L10.22 24.41 L10.00 24.25 L9.79 24.09 L9.58 23.93 L9.38 23.76 L9.04 23.73 L8.42 23.99 L7.76 24.24 L7.09 24.46 L6.41 24.63 L6.04 24.51 L5.82 24.24 L5.61 23.97 L5.40 23.70 L5.20 23.42 L5.01 23.13 L4.83 22.84 L4.66 22.55 L4.49 22.25 L4.33 21.95 L4.18 21.64 L4.03 21.33 L3.90 21.01 L3.77 20.69 L3.65 20.37 L3.73 19.99 L4.22 19.49 L4.75 19.02 L5.29 18.57 L5.83 18.16 L5.97 17.86 L5.93 17.60 L5.89 17.33 L5.86 17.07 L5.83 16.80 L5.81 16.53 L5.80 16.27 L5.80 16.00 L5.80 15.73 L5.81 15.47 L5.83 15.20 L5.86 14.93 L5.89 14.67 L5.93 14.40 L5.97 14.14 L5.83 13.84 L5.29 13.43 L4.75 12.98 L4.22 12.51 L3.73 12.01 L3.65 11.63 L3.77 11.31 L3.90 10.99 L4.03 10.67 L4.18 10.36 L4.33 10.05 L4.49 9.75 L4.66 9.45 L4.83 9.16 L5.01 8.87 L5.20 8.58 L5.40 8.30 L5.61 8.03 L5.82 7.76 L6.04 7.49 L6.41 7.37 L7.09 7.54 L7.76 7.76 L8.42 8.01 L9.04 8.27 L9.38 8.24 L9.58 8.07 L9.79 7.91 L10.00 7.75 L10.22 7.59 L10.44 7.45 L10.67 7.30 L10.90 7.17 L11.13 7.04 L11.37 6.91 L11.61 6.79 L11.85 6.68 L12.10 6.58 L12.34 6.48 L12.60 6.39 L12.79 6.11 L12.87 5.44 L12.98 4.75 L13.13 4.05 L13.32 3.38 L13.61 3.12 L13.95 3.06 L14.29 3.01 L14.63 2.97 L14.97 2.94 L15.31 2.92 L15.66 2.90 L16.00 2.90 L16.34 2.90 L16.69 2.92 L17.03 2.94 L17.37 2.97 L17.71 3.01 L18.05 3.06 L18.39 3.12 L18.68 3.38 L18.87 4.05 L19.02 4.75 L19.13 5.44 L19.21 6.11 L19.40 6.39 L19.66 6.48 L19.90 6.58 L20.15 6.68 L20.39 6.79 L20.63 6.91 L20.87 7.04 L21.10 7.17 L21.33 7.30 L21.56 7.45 L21.78 7.59 L22.00 7.75 L22.21 7.91 L22.42 8.07 L22.62 8.24 L22.96 8.27 L23.58 8.01 L24.24 7.76 L24.91 7.54 L25.59 7.37 L25.96 7.49 L26.18 7.76 L26.39 8.03 L26.60 8.30 L26.80 8.58 L26.99 8.87 L27.17 9.16 L27.34 9.45 L27.51 9.75 L27.67 10.05 L27.82 10.36 L27.97 10.67 L28.10 10.99 L28.23 11.31 L28.35 11.63 L28.27 12.01 L27.78 12.51 L27.25 12.98 L26.71 13.43 L26.17 13.84 L26.03 14.14 L26.07 14.40 L26.11 14.67 L26.14 14.93 L26.17 15.20 L26.19 15.47 L26.20 15.73 Z" fill="none" stroke="#808386" stroke-width="2.4" stroke-linejoin="round"/><circle cx="16" cy="16" r="5.2" fill="none" stroke="#808386" stroke-width="2.5"/></svg>
<svg style="left:340px;top:795px" width="28" height="30"><rect x="1" y="5" width="24.5" height="22.5" rx="2" fill="#fff" stroke="#878787" stroke-width="2"/><rect x="1" y="4" width="24.5" height="4.5" fill="#878787"/><path d="M6.5 0 V5 M19.5 0 V5" stroke="#878787" stroke-width="2"/><path d="M10 11.5 L17.5 17 L10 22.5 Z" fill="#2a9a12"/></svg>
<svg style="left:423px;top:788.8px" width="31" height="35"><g transform="scale(1.0000 1.0000)"><path d="M15.5 3 L28 10 V25 L15.5 32 L3 25 V10 Z" fill="#f09c35" stroke="#f09c35" stroke-width="6" stroke-linejoin="round"/><path d="M11.2 8.5 L15.6 8.3 Q17.6 9.2 17.9 10.6 Q19.6 13.5 19.3 16.9 L24.5 21.7 Q25.6 23 25.2 24.3 Q24.7 26.2 23.4 26.5 Q22 26.7 21.1 26.1 L16 21.5 Q12.5 21.5 9.7 20.2 Q7.3 19 6.1 16.7 L6.1 13.3 L9.4 13.3 L10.7 15 L12.8 14 L12.9 10.7 Z" fill="#fff"/></g></svg>
<div class="t" style="left:468px;top:792.93px;font-size:27.25px;color:#262a2e;">Network is slow</div>
<div class="t" style="left:890px;top:793.57px;font-size:26.5px;color:#262a2e;">Daily</div>
<div class="t" style="left:1197px;top:793.99px;font-size:26px;color:#262a2e;">May 31, 2024 12:00 AM</div>
<div class="t" style="left:1654px;top:793.57px;font-size:26.5px;color:#262a2e;">Active</div>
<div class="t" style="left:2092px;top:793.82px;font-size:26.2px;color:#262a2e;">May 23, 2024 02:34 PM</div>
<div class="a" style="left:174px;top:848px;width:2354px;height:82px;background:#ffffff;border-bottom:2px solid #e2e2e2"></div>
<div class="a" style="left:194px;top:874px;width:32px;height:32px;border:2px solid #858585;border-radius:6px;background:#fff"></div>
<svg style="left:262px;top:875px" width="32" height="32"><path d="M26.20 16.00 L26.20 16.27 L26.19 16.53 L26.17 16.80 L26.14 17.07 L26.11 17.33 L26.07 17.60 L26.03 17.86 L26.17 18.16 L26.71 18.57 L27.25 19.02 L27.78 19.49 L28.27 19.99 L28.35 20.37 L28.23 20.69 L28.10 21.01 L27.97 21.33 L27.82 21.64 L27.67 21.95 L27.51 22.25 L27.34 22.55 L27.17 22.84 L26.99 23.13 L26.80 23.42 L26.60 23.70 L26.39 23.97 L26.18 24.24 L25.96 24.51 L25.59 24.63 L24.91 24.46 L24.24 24.24 L23.58 23.99 L22.96 23.73 L22.62 23.76 L22.42 23.93 L22.21 24.09 L22.00 24.25 L21.78 24.41 L21.56 24.55 L21.33 24.70 L21.10 24.83 L20.87 24.96 L20.63 25.09 L20.39 25.21 L20.15 25.32 L19.90 25.42 L19.66 25.52 L19.40 25.61 L19.21 25.89 L19.13 26.56 L19.02 27.25 L18.87 27.95 L18.68 28.62 L18.39 28.88 L18.05 28.94 L17.71 28.99 L17.37 29.03 L17.03 29.06 L16.69 29.08 L16.34 29.10 L16.00 29.10 L15.66 29.10 L15.31 29.08 L14.97 29.06 L14.63 29.03 L14.29 28.99 L13.95 28.94 L13.61 28.88 L13.32 28.62 L13.13 27.95 L12.98 27.25 L12.87 26.56 L12.79 25.89 L12.60 25.61 L12.34 25.52 L12.10 25.42 L11.85 25.32 L11.61 25.21 L11.37 25.09 L11.13 24.96 L10.90 24.83 L10.67 24.70 L10.44 24.55 L10.22 24.41 L10.00 24.25 L9.79 24.09 L9.58 23.93 L9.38 23.76 L9.04 23.73 L8.42 23.99 L7.76 24.24 L7.09 24.46 L6.41 24.63 L6.04 24.51 L5.82 24.24 L5.61 23.97 L5.40 23.70 L5.20 23.42 L5.01 23.13 L4.83 22.84 L4.66 22.55 L4.49 22.25 L4.33 21.95 L4.18 21.64 L4.03 21.33 L3.90 21.01 L3.77 20.69 L3.65 20.37 L3.73 19.99 L4.22 19.49 L4.75 19.02 L5.29 18.57 L5.83 18.16 L5.97 17.86 L5.93 17.60 L5.89 17.33 L5.86 17.07 L5.83 16.80 L5.81 16.53 L5.80 16.27 L5.80 16.00 L5.80 15.73 L5.81 15.47 L5.83 15.20 L5.86 14.93 L5.89 14.67 L5.93 14.40 L5.97 14.14 L5.83 13.84 L5.29 13.43 L4.75 12.98 L4.22 12.51 L3.73 12.01 L3.65 11.63 L3.77 11.31 L3.90 10.99 L4.03 10.67 L4.18 10.36 L4.33 10.05 L4.49 9.75 L4.66 9.45 L4.83 9.16 L5.01 8.87 L5.20 8.58 L5.40 8.30 L5.61 8.03 L5.82 7.76 L6.04 7.49 L6.41 7.37 L7.09 7.54 L7.76 7.76 L8.42 8.01 L9.04 8.27 L9.38 8.24 L9.58 8.07 L9.79 7.91 L10.00 7.75 L10.22 7.59 L10.44 7.45 L10.67 7.30 L10.90 7.17 L11.13 7.04 L11.37 6.91 L11.61 6.79 L11.85 6.68 L12.10 6.58 L12.34 6.48 L12.60 6.39 L12.79 6.11 L12.87 5.44 L12.98 4.75 L13.13 4.05 L13.32 3.38 L13.61 3.12 L13.95 3.06 L14.29 3.01 L14.63 2.97 L14.97 2.94 L15.31 2.92 L15.66 2.90 L16.00 2.90 L16.34 2.90 L16.69 2.92 L17.03 2.94 L17.37 2.97 L17.71 3.01 L18.05 3.06 L18.39 3.12 L18.68 3.38 L18.87 4.05 L19.02 4.75 L19.13 5.44 L19.21 6.11 L19.40 6.39 L19.66 6.48 L19.90 6.58 L20.15 6.68 L20.39 6.79 L20.63 6.91 L20.87 7.04 L21.10 7.17 L21.33 7.30 L21.56 7.45 L21.78 7.59 L22.00 7.75 L22.21 7.91 L22.42 8.07 L22.62 8.24 L22.96 8.27 L23.58 8.01 L24.24 7.76 L24.91 7.54 L25.59 7.37 L25.96 7.49 L26.18 7.76 L26.39 8.03 L26.60 8.30 L26.80 8.58 L26.99 8.87 L27.17 9.16 L27.34 9.45 L27.51 9.75 L27.67 10.05 L27.82 10.36 L27.97 10.67 L28.10 10.99 L28.23 11.31 L28.35 11.63 L28.27 12.01 L27.78 12.51 L27.25 12.98 L26.71 13.43 L26.17 13.84 L26.03 14.14 L26.07 14.40 L26.11 14.67 L26.14 14.93 L26.17 15.20 L26.19 15.47 L26.20 15.73 Z" fill="none" stroke="#808386" stroke-width="2.4" stroke-linejoin="round"/><circle cx="16" cy="16" r="5.2" fill="none" stroke="#808386" stroke-width="2.5"/></svg>
<svg style="left:340px;top:877px" width="28" height="30"><rect x="1" y="5" width="24.5" height="22.5" rx="2" fill="#fff" stroke="#878787" stroke-width="2"/><rect x="1" y="4" width="24.5" height="4.5" fill="#878787"/><path d="M6.5 0 V5 M19.5 0 V5" stroke="#878787" stroke-width="2"/><path d="M10 11.5 L17.5 17 L10 22.5 Z" fill="#2a9a12"/></svg>
<svg style="left:423px;top:870.8px" width="31" height="35"><g transform="scale(1.0000 1.0000)"><path d="M15.5 3 L28 10 V25 L15.5 32 L3 25 V10 Z" fill="#f09c35" stroke="#f09c35" stroke-width="6" stroke-linejoin="round"/><path d="M11.2 8.5 L15.6 8.3 Q17.6 9.2 17.9 10.6 Q19.6 13.5 19.3 16.9 L24.5 21.7 Q25.6 23 25.2 24.3 Q24.7 26.2 23.4 26.5 Q22 26.7 21.1 26.1 L16 21.5 Q12.5 21.5 9.7 20.2 Q7.3 19 6.1 16.7 L6.1 13.3 L9.4 13.3 L10.7 15 L12.8 14 L12.9 10.7 Z" fill="#fff"/></g></svg>
<div class="t" style="left:468px;top:874.93px;font-size:27.25px;color:#262a2e;">Performance optimization</div>
<div class="t" style="left:890px;top:875.57px;font-size:26.5px;color:#262a2e;">Daily</div>
<div class="t" style="left:1197px;top:875.99px;font-size:26px;color:#262a2e;">Jan 1, 3000 12:00 AM</div>
<div class="t" style="left:1654px;top:875.57px;font-size:26.5px;color:#262a2e;">Active</div>
<div class="t" style="left:2092px;top:875.82px;font-size:26.2px;color:#262a2e;">Mar 1, 2024 05:48 PM</div>
<div class="a" style="left:174px;top:930px;width:2354px;height:82px;background:#ffffff;border-bottom:2px solid #e2e2e2"></div>
<div class="a" style="left:194px;top:956px;width:32px;height:32px;border:2px solid #858585;border-radius:6px;background:#fff"></div>
<svg style="left:262px;top:957px" width="32" height="32"><path d="M26.20 16.00 L26.20 16.27 L26.19 16.53 L26.17 16.80 L26.14 17.07 L26.11 17.33 L26.07 17.60 L26.03 17.86 L26.17 18.16 L26.71 18.57 L27.25 19.02 L27.78 19.49 L28.27 19.99 L28.35 20.37 L28.23 20.69 L28.10 21.01 L27.97 21.33 L27.82 21.64 L27.67 21.95 L27.51 22.25 L27.34 22.55 L27.17 22.84 L26.99 23.13 L26.80 23.42 L26.60 23.70 L26.39 23.97 L26.18 24.24 L25.96 24.51 L25.59 24.63 L24.91 24.46 L24.24 24.24 L23.58 23.99 L22.96 23.73 L22.62 23.76 L22.42 23.93 L22.21 24.09 L22.00 24.25 L21.78 24.41 L21.56 24.55 L21.33 24.70 L21.10 24.83 L20.87 24.96 L20.63 25.09 L20.39 25.21 L20.15 25.32 L19.90 25.42 L19.66 25.52 L19.40 25.61 L19.21 25.89 L19.13 26.56 L19.02 27.25 L18.87 27.95 L18.68 28.62 L18.39 28.88 L18.05 28.94 L17.71 28.99 L17.37 29.03 L17.03 29.06 L16.69 29.08 L16.34 29.10 L16.00 29.10 L15.66 29.10 L15.31 29.08 L14.97 29.06 L14.63 29.03 L14.29 28.99 L13.95 28.94 L13.61 28.88 L13.32 28.62 L13.13 27.95 L12.98 27.25 L12.87 26.56 L12.79 25.89 L12.60 25.61 L12.34 25.52 L12.10 25.42 L11.85 25.32 L11.61 25.21 L11.37 25.09 L11.13 24.96 L10.90 24.83 L10.67 24.70 L10.44 24.55 L10.22 24.41 L10.00 24.25 L9.79 24.09 L9.58 23.93 L9.38 23.76 L9.04 23.73 L8.42 23.99 L7.76 24.24 L7.09 24.46 L6.41 24.63 L6.04 24.51 L5.82 24.24 L5.61 23.97 L5.40 23.70 L5.20 23.42 L5.01 23.13 L4.83 22.84 L4.66 22.55 L4.49 22.25 L4.33 21.95 L4.18 21.64 L4.03 21.33 L3.90 21.01 L3.77 20.69 L3.65 20.37 L3.73 19.99 L4.22 19.49 L4.75 19.02 L5.29 18.57 L5.83 18.16 L5.97 17.86 L5.93 17.60 L5.89 17.33 L5.86 17.07 L5.83 16.80 L5.81 16.53 L5.80 16.27 L5.80 16.00 L5.80 15.73 L5.81 15.47 L5.83 15.20 L5.86 14.93 L5.89 14.67 L5.93 14.40 L5.97 14.14 L5.83 13.84 L5.29 13.43 L4.75 12.98 L4.22 12.51 L3.73 12.01 L3.65 11.63 L3.77 11.31 L3.90 10.99 L4.03 10.67 L4.18 10.36 L4.33 10.05 L4.49 9.75 L4.66 9.45 L4.83 9.16 L5.01 8.87 L5.20 8.58 L5.40 8.30 L5.61 8.03 L5.82 7.76 L6.04 7.49 L6.41 7.37 L7.09 7.54 L7.76 7.76 L8.42 8.01 L9.04 8.27 L9.38 8.24 L9.58 8.07 L9.79 7.91 L10.00 7.75 L10.22 7.59 L10.44 7.45 L10.67 7.30 L10.90 7.17 L11.13 7.04 L11.37 6.91 L11.61 6.79 L11.85 6.68 L12.10 6.58 L12.34 6.48 L12.60 6.39 L12.79 6.11 L12.87 5.44 L12.98 4.75 L13.13 4.05 L13.32 3.38 L13.61 3.12 L13.95 3.06 L14.29 3.01 L14.63 2.97 L14.97 2.94 L15.31 2.92 L15.66 2.90 L16.00 2.90 L16.34 2.90 L16.69 2.92 L17.03 2.94 L17.37 2.97 L17.71 3.01 L18.05 3.06 L18.39 3.12 L18.68 3.38 L18.87 4.05 L19.02 4.75 L19.13 5.44 L19.21 6.11 L19.40 6.39 L19.66 6.48 L19.90 6.58 L20.15 6.68 L20.39 6.79 L20.63 6.91 L20.87 7.04 L21.10 7.17 L21.33 7.30 L21.56 7.45 L21.78 7.59 L22.00 7.75 L22.21 7.91 L22.42 8.07 L22.62 8.24 L22.96 8.27 L23.58 8.01 L24.24 7.76 L24.91 7.54 L25.59 7.37 L25.96 7.49 L26.18 7.76 L26.39 8.03 L26.60 8.30 L26.80 8.58 L26.99 8.87 L27.17 9.16 L27.34 9.45 L27.51 9.75 L27.67 10.05 L27.82 10.36 L27.97 10.67 L28.10 10.99 L28.23 11.31 L28.35 11.63 L28.27 12.01 L27.78 12.51 L27.25 12.98 L26.71 13.43 L26.17 13.84 L26.03 14.14 L26.07 14.40 L26.11 14.67 L26.14 14.93 L26.17 15.20 L26.19 15.47 L26.20 15.73 Z" fill="none" stroke="#808386" stroke-width="2.4" stroke-linejoin="round"/><circle cx="16" cy="16" r="5.2" fill="none" stroke="#808386" stroke-width="2.5"/></svg>
<svg style="left:340px;top:959px" width="28" height="30"><rect x="1" y="5" width="24.5" height="22.5" rx="2" fill="#fff" stroke="#878787" stroke-width="2"/><rect x="1" y="4" width="24.5" height="4.5" fill="#878787"/><path d="M6.5 0 V5 M19.5 0 V5" stroke="#878787" stroke-width="2"/><path d="M10 11.5 L17.5 17 L10 22.5 Z" fill="#2a9a12"/></svg>
<svg style="left:423px;top:952.8px" width="31" height="35"><g transform="scale(1.0000 1.0000)"><path d="M15.5 3 L28 10 V25 L15.5 32 L3 25 V10 Z" fill="#f09c35" stroke="#f09c35" stroke-width="6" stroke-linejoin="round"/><path d="M11.2 8.5 L15.6 8.3 Q17.6 9.2 17.9 10.6 Q19.6 13.5 19.3 16.9 L24.5 21.7 Q25.6 23 25.2 24.3 Q24.7 26.2 23.4 26.5 Q22 26.7 21.1 26.1 L16 21.5 Q12.5 21.5 9.7 20.2 Q7.3 19 6.1 16.7 L6.1 13.3 L9.4 13.3 L10.7 15 L12.8 14 L12.9 10.7 Z" fill="#fff"/></g></svg>
<div class="t" style="left:468px;top:956.93px;font-size:27.25px;color:#262a2e;">Printer Problem</div>
<div class="t" style="left:890px;top:957.57px;font-size:26.5px;color:#262a2e;">Daily</div>
<div class="t" style="left:1197px;top:957.99px;font-size:26px;color:#262a2e;">May 31, 2024 09:00 PM</div>
<div class="t" style="left:1654px;top:957.57px;font-size:26.5px;color:#262a2e;">Active</div>
<div class="t" style="left:2092px;top:957.82px;font-size:26.2px;color:#262a2e;">May 23, 2024 02:31 PM</div>
<div class="a" style="left:174px;top:1012px;width:2354px;height:82px;background:#ffffff;border-bottom:2px solid #e2e2e2"></div>
<div class="a" style="left:194px;top:1038px;width:32px;height:32px;border:2px solid #858585;border-radius:6px;background:#fff"></div>
<svg style="left:262px;top:1039px" width="32" height="32"><path d="M26.20 16.00 L26.20 16.27 L26.19 16.53 L26.17 16.80 L26.14 17.07 L26.11 17.33 L26.07 17.60 L26.03 17.86 L26.17 18.16 L26.71 18.57 L27.25 19.02 L27.78 19.49 L28.27 19.99 L28.35 20.37 L28.23 20.69 L28.10 21.01 L27.97 21.33 L27.82 21.64 L27.67 21.95 L27.51 22.25 L27.34 22.55 L27.17 22.84 L26.99 23.13 L26.80 23.42 L26.60 23.70 L26.39 23.97 L26.18 24.24 L25.96 24.51 L25.59 24.63 L24.91 24.46 L24.24 24.24 L23.58 23.99 L22.96 23.73 L22.62 23.76 L22.42 23.93 L22.21 24.09 L22.00 24.25 L21.78 24.41 L21.56 24.55 L21.33 24.70 L21.10 24.83 L20.87 24.96 L20.63 25.09 L20.39 25.21 L20.15 25.32 L19.90 25.42 L19.66 25.52 L19.40 25.61 L19.21 25.89 L19.13 26.56 L19.02 27.25 L18.87 27.95 L18.68 28.62 L18.39 28.88 L18.05 28.94 L17.71 28.99 L17.37 29.03 L17.03 29.06 L16.69 29.08 L16.34 29.10 L16.00 29.10 L15.66 29.10 L15.31 29.08 L14.97 29.06 L14.63 29.03 L14.29 28.99 L13.95 28.94 L13.61 28.88 L13.32 28.62 L13.13 27.95 L12.98 27.25 L12.87 26.56 L12.79 25.89 L12.60 25.61 L12.34 25.52 L12.10 25.42 L11.85 25.32 L11.61 25.21 L11.37 25.09 L11.13 24.96 L10.90 24.83 L10.67 24.70 L10.44 24.55 L10.22 24.41 L10.00 24.25 L9.79 24.09 L9.58 23.93 L9.38 23.76 L9.04 23.73 L8.42 23.99 L7.76 24.24 L7.09 24.46 L6.41 24.63 L6.04 24.51 L5.82 24.24 L5.61 23.97 L5.40 23.70 L5.20 23.42 L5.01 23.13 L4.83 22.84 L4.66 22.55 L4.49 22.25 L4.33 21.95 L4.18 21.64 L4.03 21.33 L3.90 21.01 L3.77 20.69 L3.65 20.37 L3.73 19.99 L4.22 19.49 L4.75 19.02 L5.29 18.57 L5.83 18.16 L5.97 17.86 L5.93 17.60 L5.89 17.33 L5.86 17.07 L5.83 16.80 L5.81 16.53 L5.80 16.27 L5.80 16.00 L5.80 15.73 L5.81 15.47 L5.83 15.20 L5.86 14.93 L5.89 14.67 L5.93 14.40 L5.97 14.14 L5.83 13.84 L5.29 13.43 L4.75 12.98 L4.22 12.51 L3.73 12.01 L3.65 11.63 L3.77 11.31 L3.90 10.99 L4.03 10.67 L4.18 10.36 L4.33 10.05 L4.49 9.75 L4.66 9.45 L4.83 9.16 L5.01 8.87 L5.20 8.58 L5.40 8.30 L5.61 8.03 L5.82 7.76 L6.04 7.49 L6.41 7.37 L7.09 7.54 L7.76 7.76 L8.42 8.01 L9.04 8.27 L9.38 8.24 L9.58 8.07 L9.79 7.91 L10.00 7.75 L10.22 7.59 L10.44 7.45 L10.67 7.30 L10.90 7.17 L11.13 7.04 L11.37 6.91 L11.61 6.79 L11.85 6.68 L12.10 6.58 L12.34 6.48 L12.60 6.39 L12.79 6.11 L12.87 5.44 L12.98 4.75 L13.13 4.05 L13.32 3.38 L13.61 3.12 L13.95 3.06 L14.29 3.01 L14.63 2.97 L14.97 2.94 L15.31 2.92 L15.66 2.90 L16.00 2.90 L16.34 2.90 L16.69 2.92 L17.03 2.94 L17.37 2.97 L17.71 3.01 L18.05 3.06 L18.39 3.12 L18.68 3.38 L18.87 4.05 L19.02 4.75 L19.13 5.44 L19.21 6.11 L19.40 6.39 L19.66 6.48 L19.90 6.58 L20.15 6.68 L20.39 6.79 L20.63 6.91 L20.87 7.04 L21.10 7.17 L21.33 7.30 L21.56 7.45 L21.78 7.59 L22.00 7.75 L22.21 7.91 L22.42 8.07 L22.62 8.24 L22.96 8.27 L23.58 8.01 L24.24 7.76 L24.91 7.54 L25.59 7.37 L25.96 7.49 L26.18 7.76 L26.39 8.03 L26.60 8.30 L26.80 8.58 L26.99 8.87 L27.17 9.16 L27.34 9.45 L27.51 9.75 L27.67 10.05 L27.82 10.36 L27.97 10.67 L28.10 10.99 L28.23 11.31 L28.35 11.63 L28.27 12.01 L27.78 12.51 L27.25 12.98 L26.71 13.43 L26.17 13.84 L26.03 14.14 L26.07 14.40 L26.11 14.67 L26.14 14.93 L26.17 15.20 L26.19 15.47 L26.20 15.73 Z" fill="none" stroke="#808386" stroke-width="2.4" stroke-linejoin="round"/><circle cx="16" cy="16" r="5.2" fill="none" stroke="#808386" stroke-width="2.5"/></svg>
<svg style="left:340px;top:1041px" width="28" height="30"><rect x="1" y="5" width="24.5" height="22.5" rx="2" fill="#fff" stroke="#878787" stroke-width="2"/><rect x="1" y="4" width="24.5" height="4.5" fill="#878787"/><path d="M6.5 0 V5 M19.5 0 V5" stroke="#878787" stroke-width="2"/><path d="M10 11.5 L17.5 17 L10 22.5 Z" fill="#2a9a12"/></svg>
<svg style="left:423px;top:1034.8px" width="31" height="35"><g transform="scale(1.0000 1.0000)"><path d="M15.5 3 L28 10 V25 L15.5 32 L3 25 V10 Z" fill="#f09c35" stroke="#f09c35" stroke-width="6" stroke-linejoin="round"/><path d="M11.2 8.5 L15.6 8.3 Q17.6 9.2 17.9 10.6 Q19.6 13.5 19.3 16.9 L24.5 21.7 Q25.6 23 25.2 24.3 Q24.7 26.2 23.4 26.5 Q22 26.7 21.1 26.1 L16 21.5 Q12.5 21.5 9.7 20.2 Q7.3 19 6.1 16.7 L6.1 13.3 L9.4 13.3 L10.7 15 L12.8 14 L12.9 10.7 Z" fill="#fff"/></g></svg>
<div class="t" style="left:468px;top:1038.93px;font-size:27.25px;color:#262a2e;">Software patch update</div>
<div class="t" style="left:890px;top:1039.57px;font-size:26.5px;color:#262a2e;">Daily</div>
<div class="t" style="left:1197px;top:1039.99px;font-size:26px;color:#262a2e;">-</div>
<div class="t" style="left:1654px;top:1039.57px;font-size:26.5px;color:#262a2e;">Suspended</div>
<div class="t" style="left:2092px;top:1039.82px;font-size:26.2px;color:#262a2e;">May 23, 2024 02:33 PM</div>
<div class="a" style="left:174px;top:1094px;width:2354px;height:82px;background:#ffffff;border-bottom:2px solid #e2e2e2"></div>
<div class="a" style="left:194px;top:1120px;width:32px;height:32px;border:2px solid #858585;border-radius:6px;background:#fff"></div>
<svg style="left:262px;top:1121px" width="32" height="32"><path d="M26.20 16.00 L26.20 16.27 L26.19 16.53 L26.17 16.80 L26.14 17.07 L26.11 17.33 L26.07 17.60 L26.03 17.86 L26.17 18.16 L26.71 18.57 L27.25 19.02 L27.78 19.49 L28.27 19.99 L28.35 20.37 L28.23 20.69 L28.10 21.01 L27.97 21.33 L27.82 21.64 L27.67 21.95 L27.51 22.25 L27.34 22.55 L27.17 22.84 L26.99 23.13 L26.80 23.42 L26.60 23.70 L26.39 23.97 L26.18 24.24 L25.96 24.51 L25.59 24.63 L24.91 24.46 L24.24 24.24 L23.58 23.99 L22.96 23.73 L22.62 23.76 L22.42 23.93 L22.21 24.09 L22.00 24.25 L21.78 24.41 L21.56 24.55 L21.33 24.70 L21.10 24.83 L20.87 24.96 L20.63 25.09 L20.39 25.21 L20.15 25.32 L19.90 25.42 L19.66 25.52 L19.40 25.61 L19.21 25.89 L19.13 26.56 L19.02 27.25 L18.87 27.95 L18.68 28.62 L18.39 28.88 L18.05 28.94 L17.71 28.99 L17.37 29.03 L17.03 29.06 L16.69 29.08 L16.34 29.10 L16.00 29.10 L15.66 29.10 L15.31 29.08 L14.97 29.06 L14.63 29.03 L14.29 28.99 L13.95 28.94 L13.61 28.88 L13.32 28.62 L13.13 27.95 L12.98 27.25 L12.87 26.56 L12.79 25.89 L12.60 25.61 L12.34 25.52 L12.10 25.42 L11.85 25.32 L11.61 25.21 L11.37 25.09 L11.13 24.96 L10.90 24.83 L10.67 24.70 L10.44 24.55 L10.22 24.41 L10.00 24.25 L9.79 24.09 L9.58 23.93 L9.38 23.76 L9.04 23.73 L8.42 23.99 L7.76 24.24 L7.09 24.46 L6.41 24.63 L6.04 24.51 L5.82 24.24 L5.61 23.97 L5.40 23.70 L5.20 23.42 L5.01 23.13 L4.83 22.84 L4.66 22.55 L4.49 22.25 L4.33 21.95 L4.18 21.64 L4.03 21.33 L3.90 21.01 L3.77 20.69 L3.65 20.37 L3.73 19.99 L4.22 19.49 L4.75 19.02 L5.29 18.57 L5.83 18.16 L5.97 17.86 L5.93 17.60 L5.89 17.33 L5.86 17.07 L5.83 16.80 L5.81 16.53 L5.80 16.27 L5.80 16.00 L5.80 15.73 L5.81 15.47 L5.83 15.20 L5.86 14.93 L5.89 14.67 L5.93 14.40 L5.97 14.14 L5.83 13.84 L5.29 13.43 L4.75 12.98 L4.22 12.51 L3.73 12.01 L3.65 11.63 L3.77 11.31 L3.90 10.99 L4.03 10.67 L4.18 10.36 L4.33 10.05 L4.49 9.75 L4.66 9.45 L4.83 9.16 L5.01 8.87 L5.20 8.58 L5.40 8.30 L5.61 8.03 L5.82 7.76 L6.04 7.49 L6.41 7.37 L7.09 7.54 L7.76 7.76 L8.42 8.01 L9.04 8.27 L9.38 8.24 L9.58 8.07 L9.79 7.91 L10.00 7.75 L10.22 7.59 L10.44 7.45 L10.67 7.30 L10.90 7.17 L11.13 7.04 L11.37 6.91 L11.61 6.79 L11.85 6.68 L12.10 6.58 L12.34 6.48 L12.60 6.39 L12.79 6.11 L12.87 5.44 L12.98 4.75 L13.13 4.05 L13.32 3.38 L13.61 3.12 L13.95 3.06 L14.29 3.01 L14.63 2.97 L14.97 2.94 L15.31 2.92 L15.66 2.90 L16.00 2.90 L16.34 2.90 L16.69 2.92 L17.03 2.94 L17.37 2.97 L17.71 3.01 L18.05 3.06 L18.39 3.12 L18.68 3.38 L18.87 4.05 L19.02 4.75 L19.13 5.44 L19.21 6.11 L19.40 6.39 L19.66 6.48 L19.90 6.58 L20.15 6.68 L20.39 6.79 L20.63 6.91 L20.87 7.04 L21.10 7.17 L21.33 7.30 L21.56 7.45 L21.78 7.59 L22.00 7.75 L22.21 7.91 L22.42 8.07 L22.62 8.24 L22.96 8.27 L23.58 8.01 L24.24 7.76 L24.91 7.54 L25.59 7.37 L25.96 7.49 L26.18 7.76 L26.39 8.03 L26.60 8.30 L26.80 8.58 L26.99 8.87 L27.17 9.16 L27.34 9.45 L27.51 9.75 L27.67 10.05 L27.82 10.36 L27.97 10.67 L28.10 10.99 L28.23 11.31 L28.35 11.63 L28.27 12.01 L27.78 12.51 L27.25 12.98 L26.71 13.43 L26.17 13.84 L26.03 14.14 L26.07 14.40 L26.11 14.67 L26.14 14.93 L26.17 15.20 L26.19 15.47 L26.20 15.73 Z" fill="none" stroke="#808386" stroke-width="2.4" stroke-linejoin="round"/><circle cx="16" cy="16" r="5.2" fill="none" stroke="#808386" stroke-width="2.5"/></svg>
<svg style="left:340px;top:1123px" width="28" height="30"><rect x="1" y="5" width="24.5" height="22.5" rx="2" fill="#fff" stroke="#878787" stroke-width="2"/><rect x="1" y="4" width="24.5" height="4.5" fill="#878787"/><path d="M6.5 0 V5 M19.5 0 V5" stroke="#878787" stroke-width="2"/><path d="M10 11.5 L17.5 17 L10 22.5 Z" fill="#2a9a12"/></svg>
<svg style="left:423px;top:1116.8px" width="31" height="35"><g transform="scale(1.0000 1.0000)"><path d="M15.5 3 L28 10 V25 L15.5 32 L3 25 V10 Z" fill="#f09c35" stroke="#f09c35" stroke-width="6" stroke-linejoin="round"/><path d="M11.2 8.5 L15.6 8.3 Q17.6 9.2 17.9 10.6 Q19.6 13.5 19.3 16.9 L24.5 21.7 Q25.6 23 25.2 24.3 Q24.7 26.2 23.4 26.5 Q22 26.7 21.1 26.1 L16 21.5 Q12.5 21.5 9.7 20.2 Q7.3 19 6.1 16.7 L6.1 13.3 L9.4 13.3 L10.7 15 L12.8 14 L12.9 10.7 Z" fill="#fff"/></g></svg>
<div class="t" style="left:468px;top:1120.93px;font-size:27.25px;color:#262a2e;">Unable to fetch mails</div>
<div class="t" style="left:890px;top:1121.57px;font-size:26.5px;color:#262a2e;">Daily</div>
<div class="t" style="left:1197px;top:1121.99px;font-size:26px;color:#262a2e;">Jun 1, 2024 12:00 AM</div>
<div class="t" style="left:1654px;top:1121.57px;font-size:26.5px;color:#262a2e;">Active</div>
<div class="t" style="left:2092px;top:1121.82px;font-size:26.2px;color:#262a2e;">May 23, 2024 02:31 PM</div>
<div class="a" style="left:174px;top:1176px;width:2354px;height:82px;background:#ffffff;border-bottom:2px solid #e2e2e2"></div>
<div class="a" style="left:194px;top:1202px;width:32px;height:32px;border:2px solid #858585;border-radius:6px;background:#fff"></div>
<svg style="left:262px;top:1203px" width="32" height="32"><path d="M26.20 16.00 L26.20 16.27 L26.19 16.53 L26.17 16.80 L26.14 17.07 L26.11 17.33 L26.07 17.60 L26.03 17.86 L26.17 18.16 L26.71 18.57 L27.25 19.02 L27.78 19.49 L28.27 19.99 L28.35 20.37 L28.23 20.69 L28.10 21.01 L27.97 21.33 L27.82 21.64 L27.67 21.95 L27.51 22.25 L27.34 22.55 L27.17 22.84 L26.99 23.13 L26.80 23.42 L26.60 23.70 L26.39 23.97 L26.18 24.24 L25.96 24.51 L25.59 24.63 L24.91 24.46 L24.24 24.24 L23.58 23.99 L22.96 23.73 L22.62 23.76 L22.42 23.93 L22.21 24.09 L22.00 24.25 L21.78 24.41 L21.56 24.55 L21.33 24.70 L21.10 24.83 L20.87 24.96 L20.63 25.09 L20.39 25.21 L20.15 25.32 L19.90 25.42 L19.66 25.52 L19.40 25.61 L19.21 25.89 L19.13 26.56 L19.02 27.25 L18.87 27.95 L18.68 28.62 L18.39 28.88 L18.05 28.94 L17.71 28.99 L17.37 29.03 L17.03 29.06 L16.69 29.08 L16.34 29.10 L16.00 29.10 L15.66 29.10 L15.31 29.08 L14.97 29.06 L14.63 29.03 L14.29 28.99 L13.95 28.94 L13.61 28.88 L13.32 28.62 L13.13 27.95 L12.98 27.25 L12.87 26.56 L12.79 25.89 L12.60 25.61 L12.34 25.52 L12.10 25.42 L11.85 25.32 L11.61 25.21 L11.37 25.09 L11.13 24.96 L10.90 24.83 L10.67 24.70 L10.44 24.55 L10.22 24.41 L10.00 24.25 L9.79 24.09 L9.58 23.93 L9.38 23.76 L9.04 23.73 L8.42 23.99 L7.76 24.24 L7.09 24.46 L6.41 24.63 L6.04 24.51 L5.82 24.24 L5.61 23.97 L5.40 23.70 L5.20 23.42 L5.01 23.13 L4.83 22.84 L4.66 22.55 L4.49 22.25 L4.33 21.95 L4.18 21.64 L4.03 21.33 L3.90 21.01 L3.77 20.69 L3.65 20.37 L3.73 19.99 L4.22 19.49 L4.75 19.02 L5.29 18.57 L5.83 18.16 L5.97 17.86 L5.93 17.60 L5.89 17.33 L5.86 17.07 L5.83 16.80 L5.81 16.53 L5.80 16.27 L5.80 16.00 L5.80 15.73 L5.81 15.47 L5.83 15.20 L5.86 14.93 L5.89 14.67 L5.93 14.40 L5.97 14.14 L5.83 13.84 L5.29 13.43 L4.75 12.98 L4.22 12.51 L3.73 12.01 L3.65 11.63 L3.77 11.31 L3.90 10.99 L4.03 10.67 L4.18 10.36 L4.33 10.05 L4.49 9.75 L4.66 9.45 L4.83 9.16 L5.01 8.87 L5.20 8.58 L5.40 8.30 L5.61 8.03 L5.82 7.76 L6.04 7.49 L6.41 7.37 L7.09 7.54 L7.76 7.76 L8.42 8.01 L9.04 8.27 L9.38 8.24 L9.58 8.07 L9.79 7.91 L10.00 7.75 L10.22 7.59 L10.44 7.45 L10.67 7.30 L10.90 7.17 L11.13 7.04 L11.37 6.91 L11.61 6.79 L11.85 6.68 L12.10 6.58 L12.34 6.48 L12.60 6.39 L12.79 6.11 L12.87 5.44 L12.98 4.75 L13.13 4.05 L13.32 3.38 L13.61 3.12 L13.95 3.06 L14.29 3.01 L14.63 2.97 L14.97 2.94 L15.31 2.92 L15.66 2.90 L16.00 2.90 L16.34 2.90 L16.69 2.92 L17.03 2.94 L17.37 2.97 L17.71 3.01 L18.05 3.06 L18.39 3.12 L18.68 3.38 L18.87 4.05 L19.02 4.75 L19.13 5.44 L19.21 6.11 L19.40 6.39 L19.66 6.48 L19.90 6.58 L20.15 6.68 L20.39 6.79 L20.63 6.91 L20.87 7.04 L21.10 7.17 L21.33 7.30 L21.56 7.45 L21.78 7.59 L22.00 7.75 L22.21 7.91 L22.42 8.07 L22.62 8.24 L22.96 8.27 L23.58 8.01 L24.24 7.76 L24.91 7.54 L25.59 7.37 L25.96 7.49 L26.18 7.76 L26.39 8.03 L26.60 8.30 L26.80 8.58 L26.99 8.87 L27.17 9.16 L27.34 9.45 L27.51 9.75 L27.67 10.05 L27.82 10.36 L27.97 10.67 L28.10 10.99 L28.23 11.31 L28.35 11.63 L28.27 12.01 L27.78 12.51 L27.25 12.98 L26.71 13.43 L26.17 13.84 L26.03 14.14 L26.07 14.40 L26.11 14.67 L26.14 14.93 L26.17 15.20 L26.19 15.47 L26.20 15.73 Z" fill="none" stroke="#808386" stroke-width="2.4" stroke-linejoin="round"/><circle cx="16" cy="16" r="5.2" fill="none" stroke="#808386" stroke-width="2.5"/></svg>
<svg style="left:340px;top:1205px" width="28" height="30"><rect x="1" y="5" width="24.5" height="22.5" rx="2" fill="#fff" stroke="#878787" stroke-width="2"/><rect x="1" y="4" width="24.5" height="4.5" fill="#878787"/><path d="M6.5 0 V5 M19.5 0 V5" stroke="#878787" stroke-width="2"/><path d="M10 11.5 L17.5 17 L10 22.5 Z" fill="#2a9a12"/></svg>
<svg style="left:423px;top:1198.8px" width="31" height="35"><g transform="scale(1.0000 1.0000)"><path d="M15.5 3 L28 10 V25 L15.5 32 L3 25 V10 Z" fill="#f09c35" stroke="#f09c35" stroke-width="6" stroke-linejoin="round"/><path d="M11.2 8.5 L15.6 8.3 Q17.6 9.2 17.9 10.6 Q19.6 13.5 19.3 16.9 L24.5 21.7 Q25.6 23 25.2 24.3 Q24.7 26.2 23.4 26.5 Q22 26.7 21.1 26.1 L16 21.5 Q12.5 21.5 9.7 20.2 Q7.3 19 6.1 16.7 L6.1 13.3 L9.4 13.3 L10.7 15 L12.8 14 L12.9 10.7 Z" fill="#fff"/></g></svg>
<div class="t" style="left:468px;top:1202.93px;font-size:27.25px;color:#262a2e;">Update Active Directory</div>
<div class="t" style="left:890px;top:1203.57px;font-size:26.5px;color:#262a2e;">Daily</div>
<div class="t" style="left:1197px;top:1203.99px;font-size:26px;color:#262a2e;">Jun 7, 2024 12:00 AM</div>
<div class="t" style="left:1654px;top:1203.57px;font-size:26.5px;color:#262a2e;">Active</div>
<div class="t" style="left:2092px;top:1203.82px;font-size:26.2px;color:#262a2e;">May 23, 2024 02:34 PM</div>
<div class="a" style="left:174px;top:1258px;width:2354px;height:82px;background:#ffffff;border-bottom:2px solid #e2e2e2"></div>
<div class="a" style="left:194px;top:1284px;width:32px;height:32px;border:2px solid #858585;border-radius:6px;background:#fff"></div>
<svg style="left:262px;top:1285px" width="32" height="32"><path d="M26.20 16.00 L26.20 16.27 L26.19 16.53 L26.17 16.80 L26.14 17.07 L26.11 17.33 L26.07 17.60 L26.03 17.86 L26.17 18.16 L26.71 18.57 L27.25 19.02 L27.78 19.49 L28.27 19.99 L28.35 20.37 L28.23 20.69 L28.10 21.01 L27.97 21.33 L27.82 21.64 L27.67 21.95 L27.51 22.25 L27.34 22.55 L27.17 22.84 L26.99 23.13 L26.80 23.42 L26.60 23.70 L26.39 23.97 L26.18 24.24 L25.96 24.51 L25.59 24.63 L24.91 24.46 L24.24 24.24 L23.58 23.99 L22.96 23.73 L22.62 23.76 L22.42 23.93 L22.21 24.09 L22.00 24.25 L21.78 24.41 L21.56 24.55 L21.33 24.70 L21.10 24.83 L20.87 24.96 L20.63 25.09 L20.39 25.21 L20.15 25.32 L19.90 25.42 L19.66 25.52 L19.40 25.61 L19.21 25.89 L19.13 26.56 L19.02 27.25 L18.87 27.95 L18.68 28.62 L18.39 28.88 L18.05 28.94 L17.71 28.99 L17.37 29.03 L17.03 29.06 L16.69 29.08 L16.34 29.10 L16.00 29.10 L15.66 29.10 L15.31 29.08 L14.97 29.06 L14.63 29.03 L14.29 28.99 L13.95 28.94 L13.61 28.88 L13.32 28.62 L13.13 27.95 L12.98 27.25 L12.87 26.56 L12.79 25.89 L12.60 25.61 L12.34 25.52 L12.10 25.42 L11.85 25.32 L11.61 25.21 L11.37 25.09 L11.13 24.96 L10.90 24.83 L10.67 24.70 L10.44 24.55 L10.22 24.41 L10.00 24.25 L9.79 24.09 L9.58 23.93 L9.38 23.76 L9.04 23.73 L8.42 23.99 L7.76 24.24 L7.09 24.46 L6.41 24.63 L6.04 24.51 L5.82 24.24 L5.61 23.97 L5.40 23.70 L5.20 23.42 L5.01 23.13 L4.83 22.84 L4.66 22.55 L4.49 22.25 L4.33 21.95 L4.18 21.64 L4.03 21.33 L3.90 21.01 L3.77 20.69 L3.65 20.37 L3.73 19.99 L4.22 19.49 L4.75 19.02 L5.29 18.57 L5.83 18.16 L5.97 17.86 L5.93 17.60 L5.89 17.33 L5.86 17.07 L5.83 16.80 L5.81 16.53 L5.80 16.27 L5.80 16.00 L5.80 15.73 L5.81 15.47 L5.83 15.20 L5.86 14.93 L5.89 14.67 L5.93 14.40 L5.97 14.14 L5.83 13.84 L5.29 13.43 L4.75 12.98 L4.22 12.51 L3.73 12.01 L3.65 11.63 L3.77 11.31 L3.90 10.99 L4.03 10.67 L4.18 10.36 L4.33 10.05 L4.49 9.75 L4.66 9.45 L4.83 9.16 L5.01 8.87 L5.20 8.58 L5.40 8.30 L5.61 8.03 L5.82 7.76 L6.04 7.49 L6.41 7.37 L7.09 7.54 L7.76 7.76 L8.42 8.01 L9.04 8.27 L9.38 8.24 L9.58 8.07 L9.79 7.91 L10.00 7.75 L10.22 7.59 L10.44 7.45 L10.67 7.30 L10.90 7.17 L11.13 7.04 L11.37 6.91 L11.61 6.79 L11.85 6.68 L12.10 6.58 L12.34 6.48 L12.60 6.39 L12.79 6.11 L12.87 5.44 L12.98 4.75 L13.13 4.05 L13.32 3.38 L13.61 3.12 L13.95 3.06 L14.29 3.01 L14.63 2.97 L14.97 2.94 L15.31 2.92 L15.66 2.90 L16.00 2.90 L16.34 2.90 L16.69 2.92 L17.03 2.94 L17.37 2.97 L17.71 3.01 L18.05 3.06 L18.39 3.12 L18.68 3.38 L18.87 4.05 L19.02 4.75 L19.13 5.44 L19.21 6.11 L19.40 6.39 L19.66 6.48 L19.90 6.58 L20.15 6.68 L20.39 6.79 L20.63 6.91 L20.87 7.04 L21.10 7.17 L21.33 7.30 L21.56 7.45 L21.78 7.59 L22.00 7.75 L22.21 7.91 L22.42 8.07 L22.62 8.24 L22.96 8.27 L23.58 8.01 L24.24 7.76 L24.91 7.54 L25.59 7.37 L25.96 7.49 L26.18 7.76 L26.39 8.03 L26.60 8.30 L26.80 8.58 L26.99 8.87 L27.17 9.16 L27.34 9.45 L27.51 9.75 L27.67 10.05 L27.82 10.36 L27.97 10.67 L28.10 10.99 L28.23 11.31 L28.35 11.63 L28.27 12.01 L27.78 12.51 L27.25 12.98 L26.71 13.43 L26.17 13.84 L26.03 14.14 L26.07 14.40 L26.11 14.67 L26.14 14.93 L26.17 15.20 L26.19 15.47 L26.20 15.73 Z" fill="none" stroke="#808386" stroke-width="2.4" stroke-linejoin="round"/><circle cx="16" cy="16" r="5.2" fill="none" stroke="#808386" stroke-width="2.5"/></svg>
<svg style="left:340px;top:1287px" width="28" height="30"><rect x="1" y="5" width="24.5" height="22.5" rx="2" fill="#fff" stroke="#878787" stroke-width="2"/><rect x="1" y="4" width="24.5" height="4.5" fill="#878787"/><path d="M6.5 0 V5 M19.5 0 V5" stroke="#878787" stroke-width="2"/><path d="M10 11.5 L17.5 17 L10 22.5 Z" fill="#2a9a12"/></svg>
<svg style="left:423px;top:1280.8px" width="31" height="35"><g transform="scale(1.0000 1.0000)"><path d="M15.5 3 L28 10 V25 L15.5 32 L3 25 V10 Z" fill="#f09c35" stroke="#f09c35" stroke-width="6" stroke-linejoin="round"/><path d="M11.2 8.5 L15.6 8.3 Q17.6 9.2 17.9 10.6 Q19.6 13.5 19.3 16.9 L24.5 21.7 Q25.6 23 25.2 24.3 Q24.7 26.2 23.4 26.5 Q22 26.7 21.1 26.1 L16 21.5 Q12.5 21.5 9.7 20.2 Q7.3 19 6.1 16.7 L6.1 13.3 L9.4 13.3 L10.7 15 L12.8 14 L12.9 10.7 Z" fill="#fff"/></g></svg>
<div class="t" style="left:468px;top:1284.93px;font-size:27.25px;color:#262a2e;">Update firewall</div>
<div class="t" style="left:890px;top:1285.57px;font-size:26.5px;color:#262a2e;">Daily</div>
<div class="t" style="left:1197px;top:1285.99px;font-size:26px;color:#262a2e;">Jun 7, 2024 12:00 AM</div>
<div class="t" style="left:1654px;top:1285.57px;font-size:26.5px;color:#262a2e;">Active</div>
<div class="t" style="left:2092px;top:1285.82px;font-size:26.2px;color:#262a2e;">May 23, 2024 02:35 PM</div>
</div>
<div class="a" style="left:235px;top:450px;width:202px;height:194px;background:#fcfcfc;border-radius:6px;box-shadow:0 3px 5px rgba(0,0,0,0.12),0 8px 28px rgba(0,0,0,0.13),0 0 2px rgba(0,0,0,0.1)"></div>
<svg style="left:258px;top:428px" width="40" height="26"><path d="M3.5 22.5 L19.6 5.2 L35.7 22.5 Z" fill="#fcfcfc" stroke="#e0e0e0" stroke-width="2"/><rect x="0" y="21.5" width="40" height="4.5" fill="#fcfcfc"/></svg>
<div class="t" style="left:255px;top:475.01px;font-size:26.8px;color:#22262b;">Edit</div>
<div class="t" style="left:255px;top:533.31px;font-size:26.8px;color:#22262b;">Delete</div>
<div class="t" style="left:256px;top:591.01px;font-size:26.8px;color:#22262b;">Suspend</div>
</body></html>
